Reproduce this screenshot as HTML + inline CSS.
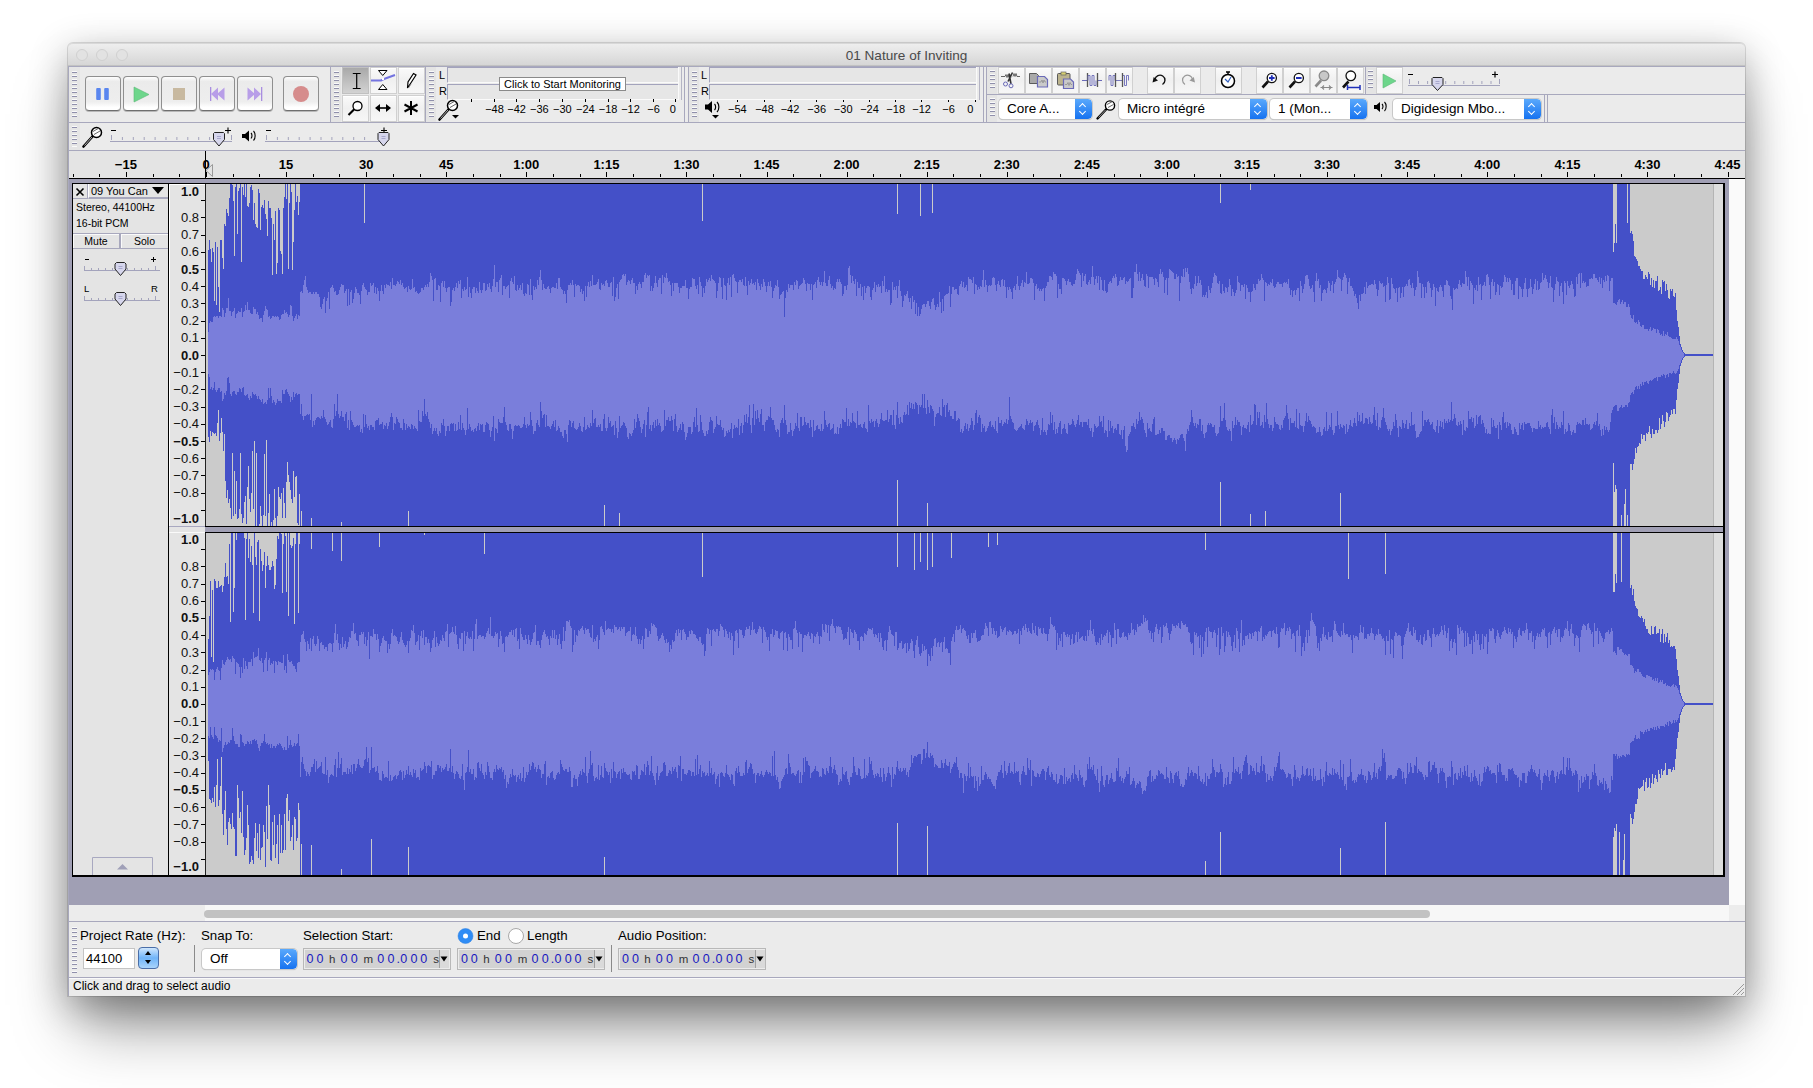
<!DOCTYPE html>
<html><head><meta charset="utf-8">
<style>
*{margin:0;padding:0;box-sizing:border-box}
html,body{width:1813px;height:1088px;overflow:hidden;background:#fff;font-family:"Liberation Sans",sans-serif;color:#000}
body{position:relative}
.a{position:absolute}
#win{position:absolute;left:68px;top:43px;width:1677px;height:953px;background:#ebebeb;border-radius:5px 5px 0 0;box-shadow:0 10px 38px rgba(0,0,0,0.3),0 40px 60px -10px rgba(0,0,0,0.4),0 0 0 1px rgba(0,0,0,0.12)}
#title{position:absolute;left:68px;top:43px;width:1677px;height:23px;border-radius:5px 5px 0 0;background:linear-gradient(#eeeeee,#d6d6d6);border-top:1px solid #d8d8d8;border-bottom:1px solid #c2c2c2}
#title .t{position:absolute;left:0;width:100%;top:4px;text-align:center;font-size:13.6px;color:#4a4a4a}
.tl{position:absolute;top:5px;width:12px;height:12px;border-radius:50%;border:1px solid #d0d0d0;background:#e2e2e2}
.hl{position:absolute;height:1px;background:#a8a8bd}
.vl{position:absolute;width:1px;background:#a8a8bd}
.grab{position:absolute;width:5px;background:repeating-linear-gradient(#fafafa 0 1px,#8f8fab 1px 2px,transparent 2px 4px)}
.btn{position:absolute;width:36px;height:35px;border-radius:4px;background:linear-gradient(#fdfdfd 0,#ebebeb 14%,#eeeeee 75%,#ffffff 92%);border:1px solid #8f8f8f;border-bottom-color:#6f6f6f;box-shadow:0 1px 0 #b8b8b8}
.tbtn{position:absolute;width:27px;height:27px;background:linear-gradient(#fafafa,#f0f0f0 50%,#f7f7f7);border:1px solid #d0d0d0;box-shadow:inset 0 1px 0 #fff}
.lbl{position:absolute;font-size:11px;white-space:nowrap}
.rul{position:absolute;font-size:13px;font-weight:bold;white-space:nowrap}
.vr{position:absolute;font-size:13px;line-height:15px;white-space:nowrap;text-align:right;width:39px;color:#111}
.combo{position:absolute;height:20px;background:#fff;border-radius:4px;box-shadow:0 0 0 1px #c8c8c8,0 1px 1px #b0b0b0;font-size:13.5px;padding-left:8px;line-height:20px;white-space:nowrap;overflow:hidden}
.combo .s{position:absolute;right:0;top:0;width:17px;height:20px;background:linear-gradient(#5aa9fc,#1672f0);border-radius:0 4px 4px 0}
.combo .s:before{content:"";position:absolute;left:5px;top:5px;width:4px;height:4px;border-left:1.5px solid #fff;border-top:1.5px solid #fff;transform:rotate(45deg)}
.combo .s:after{content:"";position:absolute;left:5px;top:10px;width:4px;height:4px;border-right:1.5px solid #fff;border-bottom:1.5px solid #fff;transform:rotate(45deg)}
.tc{position:absolute;height:21px;background:#cfcfcf;border:1px solid #bdbdbd;box-shadow:inset 0 0 0 1px #e9e9e9;font-size:13px;color:#1e1ec8;white-space:nowrap;line-height:19px;letter-spacing:1px}
</style></head><body>
<div id="win"></div>
<div id="title">
  <div class="tl" style="left:8px"></div><div class="tl" style="left:28px"></div><div class="tl" style="left:48px"></div>
  <div class="t">01 Nature of Inviting</div>
</div>
<!-- TOOLBARS -->
<div class="a" style="left:69px;top:67px;width:1676px;height:83px;background:#ebebeb"></div>
<div class="hl" style="left:68px;top:66px;width:1677px"></div>
<div class="vl" style="left:68px;top:66px;height:930px"></div>
<div class="hl" style="left:69px;top:122px;width:1676px"></div>
<div class="hl" style="left:986px;top:94px;width:759px"></div>
<div class="a" style="left:331px;top:67px;width:10px;height:55px;background:#e4e4e4"></div><div class="a" style="left:426px;top:67px;width:10px;height:55px;background:#e4e4e4"></div><div class="a" style="left:689px;top:67px;width:10px;height:55px;background:#e4e4e4"></div><div class="a" style="left:987px;top:67px;width:10px;height:27px;background:#e4e4e4"></div><div class="a" style="left:1366px;top:67px;width:10px;height:27px;background:#e4e4e4"></div><div class="a" style="left:987px;top:95px;width:10px;height:27px;background:#e4e4e4"></div>
<!-- transport toolbar -->
<div class="a" style="left:69px;top:67px;width:11px;height:55px;background:#e5e5e5"></div><div class="grab" style="left:72px;top:71px;height:47px"></div>
<div class="btn" style="left:85px;top:76px"></div>
<div class="btn" style="left:123px;top:76px"></div>
<div class="btn" style="left:161px;top:76px"></div>
<div class="btn" style="left:199px;top:76px"></div>
<div class="btn" style="left:237px;top:76px"></div>
<div class="btn" style="left:283px;top:76px"></div>
<svg class="a" style="left:0;top:0" width="400" height="125">
  <rect x="96.2" y="88" width="4.6" height="12" rx="1" fill="#5a86ef"/><rect x="104.2" y="88" width="4.6" height="12" rx="1" fill="#5a86ef"/>
  <path d="M134 87 L149 94.5 L134 102Z" fill="#6dd68b" stroke="#5bb877" stroke-width="0.6"/>
  <rect x="173" y="88" width="12" height="12" fill="#c8b9a0"/>
  <rect x="210" y="87" width="1.3" height="14" fill="#a98ee0"/><path d="M211 94 L218 87.5 L218 100.5Z M217 94 L224.5 87.5 L224.5 100.5Z" fill="#b89ee8"/>
  <rect x="261" y="87" width="1.3" height="14" fill="#a98ee0"/><path d="M261 94 L254 87.5 L254 100.5Z M255 94 L247.5 87.5 L247.5 100.5Z" fill="#b89ee8"/>
  <circle cx="301" cy="94" r="8" fill="#d68c8c"/>
</svg>
<div class="vl" style="left:330px;top:67px;height:55px"></div>
<!-- tools toolbar -->
<div class="grab" style="left:334px;top:71px;height:47px"></div>
<div class="tbtn" style="left:342px;top:67px;background:linear-gradient(#a9a9a9,#c6c6c6 70%,#d2d2d2);box-shadow:none;border-color:#c0c0c0"></div>
<div class="tbtn" style="left:370px;top:67px"></div>
<div class="tbtn" style="left:398px;top:67px"></div>
<div class="tbtn" style="left:342px;top:95px"></div>
<div class="tbtn" style="left:370px;top:95px"></div>
<div class="tbtn" style="left:398px;top:95px"></div>
<svg class="a" style="left:0;top:0" width="440" height="125">
  <path d="M352.8 73.5h7.8M352.8 88.5h7.8M356.7 73.5v15" stroke="#000" stroke-width="1.2" fill="none"/>
  <path d="M378.5 70.5h8.5l-4.25 5z M378.5 89.5h8.5l-4.25 -5z" stroke="#000" stroke-width="1" fill="#fff"/>
  <path d="M371 80.5 L381 80.5 L384 79 L395 75" stroke="#7474e0" stroke-width="2" fill="none"/><circle cx="383" cy="79" r="1.2" fill="#fff"/>
  <path d="M407.5 88 L408 82 L413.5 73.5 L416 75 L410.5 83.5 Z" stroke="#000" stroke-width="1.2" fill="#fff"/><path d="M408.5 88l2.5 -4" stroke="#777" stroke-width="0.8"/>
  <circle cx="357.5" cy="106" r="4.5" stroke="#000" stroke-width="1.3" fill="#fff"/><path d="M354.5 109 L348.5 115" stroke="#000" stroke-width="2.2"/>
  <path d="M376 108h14" stroke="#000" stroke-width="1.6"/><path d="M375 108l5-4v8z M391 108l-5-4v8z" fill="#000"/>
  <path d="M411 101v14 M404.5 104.5l13 7 M417.5 104.5l-13 7" stroke="#000" stroke-width="2"/>
</svg>
<div class="vl" style="left:425px;top:67px;height:55px"></div>
<!-- record meter -->
<div class="grab" style="left:429px;top:71px;height:47px"></div>
<div class="lbl" style="left:439px;top:69px;font-size:11px">L</div>
<div class="lbl" style="left:439px;top:85px;font-size:11px">R</div>
<div class="a" style="left:447px;top:67px;width:232px;height:16px;border-left:1px solid #a3a3bc;border-top:1px solid #a3a3bc;border-bottom:1px solid #fafafa;background:#e6e6e6"></div>
<div class="a" style="left:447px;top:84px;width:232px;height:16px;border-left:1px solid #a3a3bc;border-top:1px solid #a3a3bc;border-bottom:1px solid #fafafa;background:#e6e6e6"></div>
<div class="a" style="left:499px;top:77px;width:127px;height:14px;background:#fff;border:1px solid #8a8a8a;font-size:11px;line-height:12px;text-align:center;white-space:nowrap">Click to Start Monitoring</div>
<div class="vl" style="left:678px;top:67px;height:33px;background:#fafafa"></div><div class="vl" style="left:681px;top:67px;height:33px;background:#b4b4c4"></div>
<div class="vl" style="left:684px;top:67px;height:55px"></div>
<div class="vl" style="left:688px;top:67px;height:55px"></div>
<svg class="a" style="left:0;top:0" width="1000" height="125">
  <g stroke="#000" stroke-width="1">
  <path d="M471.5 99v3M494.5 99v3M516.5 99v3M539.5 99v3M562.5 99v3M585.5 99v3M608.5 99v3M630.5 99v3M653.5 99v3M675.5 99v3"/>
  <path d="M737.5 99v3M764.5 99v3M790.5 99v3M816.5 99v3M843.5 99v3M869.5 99v3M895.5 99v3M921.5 99v3M948.5 99v3M975.5 99v3"/>
  </g>
  <!-- mic icons -->
  <g id="mic"><path d="M439.5 119.5 L448.5 109.5" stroke="#000" stroke-width="2.6" stroke-linecap="round"/><path d="M440.5 118.5 L448 110" stroke="#fff" stroke-width="0.7"/><circle cx="452.5" cy="105.5" r="5" fill="#fff" stroke="#000" stroke-width="1.5"/><path d="M449 104.5l6 -3.5 M450 107.5l6 -3.5" stroke="#555" stroke-width="0.9"/></g>
  <path d="M452 115h7l-3.5 3.5z" fill="#000"/>
  <!-- speaker icon -->
  <path d="M705 104.5h3l4 -3.5v12l-4 -3.5h-3z" fill="#000"/><path d="M714.5 104c1.5 1.5 1.5 4.5 0 6 M717 102c2.5 2.5 2.5 7.5 0 10" stroke="#000" stroke-width="1.2" fill="none"/>
  <path d="M712 115h7l-3.5 3.5z" fill="#000"/>
</svg>
<div class="lbl" style="left:494.5px;top:103px;width:30px;margin-left:-15px;text-align:center">&#8722;48</div><div class="lbl" style="left:516.6px;top:103px;width:30px;margin-left:-15px;text-align:center">&#8722;42</div><div class="lbl" style="left:539.3px;top:103px;width:30px;margin-left:-15px;text-align:center">&#8722;36</div><div class="lbl" style="left:562.4px;top:103px;width:30px;margin-left:-15px;text-align:center">&#8722;30</div><div class="lbl" style="left:585.4px;top:103px;width:30px;margin-left:-15px;text-align:center">&#8722;24</div><div class="lbl" style="left:608.1px;top:103px;width:30px;margin-left:-15px;text-align:center">&#8722;18</div><div class="lbl" style="left:630.5px;top:103px;width:30px;margin-left:-15px;text-align:center">&#8722;12</div><div class="lbl" style="left:653.5px;top:103px;width:30px;margin-left:-15px;text-align:center">&#8722;6</div><div class="lbl" style="left:672.8px;top:103px;width:30px;margin-left:-15px;text-align:center">0</div>
<!-- play meter -->
<div class="grab" style="left:692px;top:71px;height:47px"></div>
<div class="lbl" style="left:701px;top:69px">L</div>
<div class="lbl" style="left:701px;top:85px">R</div>
<div class="a" style="left:709px;top:67px;width:268px;height:16px;border-left:1px solid #a3a3bc;border-top:1px solid #a3a3bc;border-bottom:1px solid #fafafa;background:#e6e6e6"></div>
<div class="a" style="left:709px;top:84px;width:268px;height:16px;border-left:1px solid #a3a3bc;border-top:1px solid #a3a3bc;border-bottom:1px solid #fafafa;background:#e6e6e6"></div>
<div class="vl" style="left:976px;top:67px;height:33px;background:#fafafa"></div><div class="vl" style="left:979px;top:67px;height:33px;background:#b4b4c4"></div>
<div class="lbl" style="left:737.3px;top:103px;width:30px;margin-left:-15px;text-align:center">&#8722;54</div><div class="lbl" style="left:764.5px;top:103px;width:30px;margin-left:-15px;text-align:center">&#8722;48</div><div class="lbl" style="left:790.0px;top:103px;width:30px;margin-left:-15px;text-align:center">&#8722;42</div><div class="lbl" style="left:816.7px;top:103px;width:30px;margin-left:-15px;text-align:center">&#8722;36</div><div class="lbl" style="left:843.2px;top:103px;width:30px;margin-left:-15px;text-align:center">&#8722;30</div><div class="lbl" style="left:869.5px;top:103px;width:30px;margin-left:-15px;text-align:center">&#8722;24</div><div class="lbl" style="left:895.7px;top:103px;width:30px;margin-left:-15px;text-align:center">&#8722;18</div><div class="lbl" style="left:921.6px;top:103px;width:30px;margin-left:-15px;text-align:center">&#8722;12</div><div class="lbl" style="left:948.5px;top:103px;width:30px;margin-left:-15px;text-align:center">&#8722;6</div><div class="lbl" style="left:970.2px;top:103px;width:30px;margin-left:-15px;text-align:center">0</div>
<div class="vl" style="left:983px;top:67px;height:55px"></div>
<div class="vl" style="left:986px;top:67px;height:55px"></div>
<!-- edit toolbar -->
<div class="grab" style="left:990px;top:70px;height:20px"></div>
<div class="tbtn" style="left:998px;top:67px"></div>
<div class="tbtn" style="left:1025px;top:67px"></div>
<div class="tbtn" style="left:1052px;top:67px"></div>
<div class="tbtn" style="left:1079px;top:67px"></div>
<div class="tbtn" style="left:1106px;top:67px"></div>
<div class="tbtn" style="left:1147px;top:67px"></div>
<div class="tbtn" style="left:1174px;top:67px"></div>
<div class="tbtn" style="left:1215px;top:67px"></div>
<div class="tbtn" style="left:1256px;top:67px"></div>
<div class="tbtn" style="left:1283px;top:67px"></div>
<div class="tbtn" style="left:1310px;top:67px"></div>
<div class="tbtn" style="left:1337px;top:67px"></div>
<div class="vl" style="left:1365px;top:67px;height:27px"></div>
<div class="grab" style="left:1368px;top:70px;height:20px"></div>
<div class="tbtn" style="left:1376px;top:67px"></div>
<svg class="a" style="left:0;top:0" width="1560" height="125">
  <!-- cut -->
  <path d="M1001 76.5h4l1 -2l1 3l1 -3l1 3l1 -3l1 3 M1013 76.5l1 -3l1 3l1 -3l1 3h3" stroke="#555" stroke-width="0.9" fill="none"/>
  <path d="M1012.5 72.5 L1008 81.5 M1009 73.5 L1011 84" stroke="#333" stroke-width="1.6"/>
  <circle cx="1005.5" cy="84" r="2" stroke="#6a6ab8" stroke-width="1" fill="none"/><circle cx="1011" cy="85.8" r="2" stroke="#6a6ab8" stroke-width="1" fill="none"/>
  <!-- copy -->
  <path d="M1029.5 73.5h7l2 2v8h-9z" fill="#a9a9a9" stroke="#5a5a5a" stroke-width="1"/>
  <path d="M1037.5 76.5h7l3 3v7.5h-10z" fill="#cacaca" stroke="#6a6ab8" stroke-width="1.2"/>
  <path d="M1039 82h2l1 -2l1 3l1 -3l1 2h1" stroke="#888" stroke-width="0.7" fill="none"/>
  <!-- paste -->
  <rect x="1057.5" y="73.5" width="12.5" height="11.5" rx="1" fill="#bcb48e" stroke="#5a5a5a" stroke-width="1"/>
  <rect x="1061" y="72" width="5" height="3" fill="#d8d070" stroke="#666" stroke-width="0.7"/>
  <path d="M1063.5 79h7l3 3v6.5h-10z" fill="#cacaca" stroke="#6a6ab8" stroke-width="1.2"/>
  <path d="M1065 84.5h2l1 -2l1 3l1 -3l1 2h1" stroke="#888" stroke-width="0.7" fill="none"/>
  <!-- trim -->
  <path d="M1082 80.5h5.5 M1097.5 80.5h4.5" stroke="#6a6ab8" stroke-width="1"/>
  <path d="M1087.5 73v14 M1097.5 73v14" stroke="#555" stroke-width="1.3"/>
  <path d="M1088 80.5v-5h2v10h2v-10h2v10h2v-5" stroke="#6a6ab8" stroke-width="0.9" fill="none"/>
  <!-- silence -->
  <path d="M1109 80.5v-5h2v10h2v-10h2v5 M1122.5 80.5v-5h2v10h2v-10h2v5 M1115.5 80.5h7" stroke="#6a6ab8" stroke-width="0.9" fill="none"/>
  <path d="M1115.5 73v14 M1122.5 73v14" stroke="#555" stroke-width="1.3"/>
  <!-- undo/redo -->
  <path d="M1155 79.5 A5 5 0 1 1 1162.5 84.5" stroke="#111" stroke-width="1.4" fill="none"/><path d="M1152.5 82.5l1.2 -5.5l4.3 3.5z" fill="#111"/>
  <path d="M1192.5 79.5 A5 5 0 1 0 1185 84.5" stroke="#999" stroke-width="1.2" fill="none"/><path d="M1195 82.5l-1.2 -5.5l-4.3 3.5z" fill="#999"/>
  <!-- sync lock (timer) -->
  <circle cx="1228" cy="81" r="6.5" stroke="#000" stroke-width="1.5" fill="#fff"/><path d="M1226 72h4 M1228 72v3" stroke="#000" stroke-width="1.4"/><path d="M1225 79l3 3l3 -5" stroke="#3060c0" stroke-width="1.2" fill="none"/>
  <!-- zoom in/out/sel/fit -->
  <g stroke-width="2.6" stroke-linecap="butt"><path d="M1262.5 87.5l5.5 -6 M1289.5 87.5l5.5 -6 M1343 87.5l5.5 -6" stroke="#111"/><path d="M1315.5 86.5l5.5 -6" stroke="#8a8a8a"/></g>
  <g stroke-width="1.3"><circle cx="1271.8" cy="78" r="4.6" stroke="#111" fill="#fff"/><circle cx="1298.8" cy="78" r="4.6" stroke="#111" fill="#fff"/><circle cx="1324" cy="75.8" r="4.8" stroke="#8a8a8a" fill="#c8c8c8"/><circle cx="1350.8" cy="75.8" r="4.8" stroke="#111" fill="#fff"/></g>
  <path d="M1269 78h5.6 M1271.8 75.2v5.6 M1296 78h5.6" stroke="#1f2fb8" stroke-width="1.8"/>
  <path d="M1320.5 87.5h12 M1324 85.5l-2 2l2 2 M1329 85.5l2 2l-2 2" stroke="#8a8a8a" stroke-width="1.1" fill="none"/>
  <path d="M1347.5 87.5h12.5 M1347.5 85v5 M1360 85v5" stroke="#1f2fb8" stroke-width="1.5"/>
  <!-- play at speed -->
  <path d="M1383 74l13 7l-13 7z" fill="#6dd68b" stroke="#5bb877" stroke-width="0.6"/>
  <!-- speed slider -->
  <path d="M1408 85.5h92" stroke="#a3a3bc" stroke-width="1"/><path d="M1418.5 81v3 M1427.6 81v3 M1436.7 81v3 M1445.7 81v3 M1454.8 81v3 M1463.8 81v3 M1472.8 81v3 M1481.9 81v3 M1491.0 81v3 M1409.5 79v5 M1499.5 79v5" stroke="#a3a3bc" stroke-width="1"/>
  <path d="M1408 74.5h5 M1492 74.5h6 M1495 71.5v6" stroke="#000" stroke-width="1.2"/>
  <path d="M1433 77.5h9l1 1v6l-5.5 6l-5.5 -6v-6z" fill="#d6d6ec" stroke="#222" stroke-width="1"/><path d="M1435.5 81.5h4 M1435.5 83.5h4" stroke="#9a9ac4" stroke-width="0.8"/>
</svg>
<!-- device toolbar -->
<div class="grab" style="left:990px;top:98px;height:20px"></div>
<div class="combo" style="left:999px;top:99px;width:93px">Core A...<div class="s"></div></div>
<div class="combo" style="left:1119px;top:99px;width:148px">Micro intégré<div class="s"></div></div>
<div class="combo" style="left:1270px;top:99px;width:97px">1 (Mon...<div class="s"></div></div>
<div class="combo" style="left:1393px;top:99px;width:148px">Digidesign Mbo...<div class="s"></div></div>
<svg class="a" style="left:0;top:0" width="1560" height="125">
  <path d="M1097.5 118.5 L1106 109.5" stroke="#000" stroke-width="2.4" stroke-linecap="round"/><path d="M1098.5 117.5 L1105.5 110" stroke="#fff" stroke-width="0.6"/><circle cx="1110" cy="105.5" r="4.6" fill="#fff" stroke="#000" stroke-width="1.4"/><path d="M1107 104.5l5.5 -3 M1108 107.5l5.5 -3" stroke="#555" stroke-width="0.9"/>
  <path d="M1374 105h2.5l3.5 -3v10l-3.5 -3h-2.5z" fill="#000"/><path d="M1382 104c1.3 1.3 1.3 3.7 0 5 M1384.5 102c2.2 2.2 2.2 6.8 0 9" stroke="#000" stroke-width="1.1" fill="none"/>
</svg>
<div class="vl" style="left:1544px;top:95px;height:27px"></div>
<div class="vl" style="left:1547px;top:95px;height:27px"></div>
<!-- mixer toolbar -->
<div class="a" style="left:69px;top:123px;width:11px;height:27px;background:#e5e5e5"></div><div class="grab" style="left:72px;top:126px;height:21px"></div>
<svg class="a" style="left:0;top:120px" width="400" height="30"><path d="M83.5 26.5 L92.5 16.5" stroke="#000" stroke-width="2.6" stroke-linecap="round"/><path d="M84.5 25.5 L92 17" stroke="#fff" stroke-width="0.7"/><circle cx="96.5" cy="12.5" r="5" fill="#fff" stroke="#000" stroke-width="1.5"/><path d="M93 11.5l6 -3.5 M94 14.5l6 -3.5" stroke="#555" stroke-width="0.9"/><path d="M110 21.5h122 M265 21.5h122" stroke="#a3a3bc" stroke-width="1"/><path d="M122.4 17v3 M133.3 17v3 M144.2 17v3 M155.1 17v3 M166.0 17v3 M176.9 17v3 M187.8 17v3 M198.7 17v3 M209.6 17v3 M277.4 17v3 M288.3 17v3 M299.2 17v3 M310.1 17v3 M321.0 17v3 M331.9 17v3 M342.8 17v3 M353.7 17v3 M364.6 17v3 M111.5 15v5 M231.5 15v5 M266.5 15v5" stroke="#a3a3bc" stroke-width="1"/><path d="M111 10.5h5 M225 10.5h6 M228 7.5v6 M266 10.5h5 M381 10.5h6 M384 7.5v6" stroke="#000" stroke-width="1.1"/><path d="M214.5 12.5h9l1 1v6l-5.5 6.5l-5.5 -6.5v-6z M379 12.5h9l1 1v6l-5.5 6.5l-5.5 -6.5v-6z" fill="#d6d6ec" stroke="#222" stroke-width="1"/><path d="M217 16.5h4 M217 18.5h4 M381.5 16.5h4 M381.5 18.5h4" stroke="#9a9ac4" stroke-width="0.8"/><path d="M242 14h3l4 -3.5v11l-4 -3.5h-3z" fill="#000"/><path d="M251 13c1.3 1.3 1.3 4 0 5.5 M253.5 11c2.2 2.2 2.2 7.5 0 9.5" stroke="#000" stroke-width="1.1" fill="none"/></svg>

<!-- RULER -->
<div class="a" style="left:69px;top:150px;width:1676px;height:29px;background:#e4e4e4;border-top:1px solid #a8a8bd"></div>
<div class="a" style="left:69px;top:178px;width:1676px;height:1px;background:#000"></div>
<div class="rul" style="left:125.9px;top:157px;width:60px;margin-left:-30px;text-align:center">&#8722;15</div>
<div class="rul" style="left:206.0px;top:157px;width:60px;margin-left:-30px;text-align:center">0</div>
<div class="rul" style="left:286.1px;top:157px;width:60px;margin-left:-30px;text-align:center">15</div>
<div class="rul" style="left:366.2px;top:157px;width:60px;margin-left:-30px;text-align:center">30</div>
<div class="rul" style="left:446.2px;top:157px;width:60px;margin-left:-30px;text-align:center">45</div>
<div class="rul" style="left:526.3px;top:157px;width:60px;margin-left:-30px;text-align:center">1:00</div>
<div class="rul" style="left:606.4px;top:157px;width:60px;margin-left:-30px;text-align:center">1:15</div>
<div class="rul" style="left:686.5px;top:157px;width:60px;margin-left:-30px;text-align:center">1:30</div>
<div class="rul" style="left:766.6px;top:157px;width:60px;margin-left:-30px;text-align:center">1:45</div>
<div class="rul" style="left:846.6px;top:157px;width:60px;margin-left:-30px;text-align:center">2:00</div>
<div class="rul" style="left:926.7px;top:157px;width:60px;margin-left:-30px;text-align:center">2:15</div>
<div class="rul" style="left:1006.8px;top:157px;width:60px;margin-left:-30px;text-align:center">2:30</div>
<div class="rul" style="left:1086.9px;top:157px;width:60px;margin-left:-30px;text-align:center">2:45</div>
<div class="rul" style="left:1167.0px;top:157px;width:60px;margin-left:-30px;text-align:center">3:00</div>
<div class="rul" style="left:1247.0px;top:157px;width:60px;margin-left:-30px;text-align:center">3:15</div>
<div class="rul" style="left:1327.1px;top:157px;width:60px;margin-left:-30px;text-align:center">3:30</div>
<div class="rul" style="left:1407.2px;top:157px;width:60px;margin-left:-30px;text-align:center">3:45</div>
<div class="rul" style="left:1487.3px;top:157px;width:60px;margin-left:-30px;text-align:center">4:00</div>
<div class="rul" style="left:1567.4px;top:157px;width:60px;margin-left:-30px;text-align:center">4:15</div>
<div class="rul" style="left:1647.4px;top:157px;width:60px;margin-left:-30px;text-align:center">4:30</div>
<div class="rul" style="left:1727.5px;top:157px;width:60px;margin-left:-30px;text-align:center">4:45</div>
<svg class="a" style="left:0;top:0" width="1813" height="185"><path d="M73.5 174v3 M99.5 174v3 M126.5 172v5 M153.5 174v3 M179.5 174v3 M206.5 172v5 M233.5 174v3 M259.5 174v3 M286.5 172v5 M313.5 174v3 M339.5 174v3 M366.5 172v5 M393.5 174v3 M420.5 174v3 M446.5 172v5 M473.5 174v3 M500.5 174v3 M526.5 172v5 M553.5 174v3 M580.5 174v3 M606.5 172v5 M633.5 174v3 M660.5 174v3 M686.5 172v5 M713.5 174v3 M740.5 174v3 M767.5 172v5 M793.5 174v3 M820.5 174v3 M847.5 172v5 M873.5 174v3 M900.5 174v3 M927.5 172v5 M953.5 174v3 M980.5 174v3 M1007.5 172v5 M1033.5 174v3 M1060.5 174v3 M1087.5 172v5 M1114.5 174v3 M1140.5 174v3 M1167.5 172v5 M1194.5 174v3 M1220.5 174v3 M1247.5 172v5 M1274.5 174v3 M1300.5 174v3 M1327.5 172v5 M1354.5 174v3 M1381.5 174v3 M1407.5 172v5 M1434.5 174v3 M1461.5 174v3 M1487.5 172v5 M1514.5 174v3 M1541.5 174v3 M1567.5 172v5 M1594.5 174v3 M1621.5 174v3 M1647.5 172v5 M1674.5 174v3 M1701.5 174v3 M1728.5 172v5" stroke="#000" stroke-width="1"/><path d="M205.5 151v27" stroke="#000" stroke-width="1"/><path d="M212.5 164.5v12l-6.5 -6z" fill="none" stroke="#9a9a9a" stroke-width="1"/></svg>

<!-- TRACK AREA -->
<div class="a" style="left:69px;top:179px;width:1660px;height:726px;background:#a09fb4"></div>
<div class="a" style="left:1729px;top:179px;width:16px;height:726px;background:#fafafa"></div>
<!-- track panel -->
<div class="a" style="left:72px;top:183px;width:1653px;height:694px;background:#000"></div>
<div class="a" style="left:73px;top:184px;width:95px;height:691px;background:#e4e4e4"></div>
<div class="a" style="left:169px;top:184px;width:36px;height:342px;background:#e4e4e4;border-top:1px solid #fff;border-left:1px solid #fff"></div>
<div class="a" style="left:169px;top:533px;width:36px;height:342px;background:#e4e4e4"></div>
<div class="a" style="left:169px;top:526px;width:1554px;height:7px;background:#a09fb4"></div>
<div class="a" style="left:169px;top:526px;width:1554px;height:1px;background:#000"></div>
<div class="a" style="left:169px;top:532px;width:1554px;height:1px;background:#000"></div>
<div class="a" style="left:169px;top:526px;width:36px;height:7px;background:#e4e4e4;border-top:1px solid #a8a8c0;border-bottom:1px solid #fafafa"></div>
<div class="a" style="left:1713px;top:184px;width:10px;height:342px;background:#dedede;border-left:1px solid #b4b4b4"></div>
<div class="a" style="left:1713px;top:533px;width:10px;height:342px;background:#dedede;border-left:1px solid #b4b4b4"></div>
<!-- TCP -->
<div class="a" style="left:73px;top:184px;width:15px;height:15px;border:1px solid #a8a8bd;border-top:0;border-left:0;font-size:13px;line-height:14px;text-align:center;font-weight:bold"></div>
<div class="a" style="left:88px;top:184px;width:80px;height:15px;border-left:1px solid #fff;border-bottom:2px solid #a8a8bd;font-size:11px;line-height:15px;padding-left:2px;white-space:nowrap">09 You Can</div>
<svg class="a" style="left:0;top:0" width="210" height="880">
  <path d="M152 187h12l-6 7z" fill="#000"/>
  <path d="M76.5 188.5l7 7M83.5 188.5l-7 7" stroke="#000" stroke-width="1.6"/>
</svg>
<div class="lbl" style="left:76px;top:201px;font-size:10.5px">Stereo, 44100Hz</div>
<div class="lbl" style="left:76px;top:217px;font-size:10.5px">16-bit PCM</div>
<div class="a" style="left:73px;top:233px;width:47px;height:16px;border:1px solid #a8a8bd;border-left:0;border-top:1px solid #a8a8bd;font-size:10.5px;line-height:14px;text-align:center;background:#e4e4e4;box-shadow:inset 1px 1px 0 #fafafa">Mute</div>
<div class="a" style="left:120px;top:233px;width:48px;height:16px;border:1px solid #a8a8bd;border-right:0;font-size:10.5px;line-height:14px;text-align:center;background:#e4e4e4;box-shadow:inset 1px 1px 0 #fafafa">Solo</div>
<svg class="a" style="left:0;top:0" width="210" height="880">
  <g stroke="#a3a3bc" stroke-width="1"><path d="M84 270.5h76 M84 300.5h76"/></g>
  <g stroke="#a3a3bc" stroke-width="1"><path d="M84.5 266v4M91.5 268v2M98.5 268v2M105.5 268v2M112.5 268v2M127.5 268v2M134.5 268v2M141.5 268v2M148.5 268v2M155.5 266v4 M84.5 296v4M91.5 298v2M98.5 298v2M105.5 298v2M112.5 298v2M127.5 298v2M134.5 298v2M141.5 298v2M148.5 298v2M155.5 296v4"/></g>
  <path d="M85 259.5h4 M151 259.5h5 M153.5 257v5" stroke="#000" stroke-width="1"/>
  <path d="M116.5 262.5h8l1.5 1.5v5l-5.5 6.5l-5.5 -6.5v-5z M116.5 292.5h8l1.5 1.5v5l-5.5 6.5l-5.5 -6.5v-5z" fill="#d6d6ec" stroke="#222" stroke-width="1"/><path d="M118.5 266.5h4 M118.5 268.5h4 M118.5 296.5h4 M118.5 298.5h4" stroke="#9a9ac4" stroke-width="0.8"/>
  
  <path d="M92.5 875v-17.5h60v17.5" fill="#e4e4e4" stroke="#a8a8c0" stroke-width="1"/>
  <path d="M117 869.5h11l-5.5 -5.5z" fill="#a0a0b8"/>
</svg>
<div class="lbl" style="left:84px;top:283px;font-size:9.5px">L</div>
<div class="lbl" style="left:151px;top:283px;font-size:9.5px">R</div>
<div class="vr" style="left:160px;top:184px;font-weight:bold;">1.0</div>
<div class="vr" style="left:160px;top:210px;">0.8</div>
<div class="vr" style="left:160px;top:227px;">0.7</div>
<div class="vr" style="left:160px;top:244px;">0.6</div>
<div class="vr" style="left:160px;top:262px;font-weight:bold;">0.5</div>
<div class="vr" style="left:160px;top:279px;">0.4</div>
<div class="vr" style="left:160px;top:296px;">0.3</div>
<div class="vr" style="left:160px;top:313px;">0.2</div>
<div class="vr" style="left:160px;top:330px;">0.1</div>
<div class="vr" style="left:160px;top:348px;font-weight:bold;">0.0</div>
<div class="vr" style="left:160px;top:365px;">&#8722;0.1</div>
<div class="vr" style="left:160px;top:382px;">&#8722;0.2</div>
<div class="vr" style="left:160px;top:399px;">&#8722;0.3</div>
<div class="vr" style="left:160px;top:416px;">&#8722;0.4</div>
<div class="vr" style="left:160px;top:434px;font-weight:bold;">&#8722;0.5</div>
<div class="vr" style="left:160px;top:451px;">&#8722;0.6</div>
<div class="vr" style="left:160px;top:468px;">&#8722;0.7</div>
<div class="vr" style="left:160px;top:485px;">&#8722;0.8</div>
<div class="vr" style="left:160px;top:511px;font-weight:bold;">&#8722;1.0</div>
<div class="vr" style="left:160px;top:532px;font-weight:bold;">1.0</div>
<div class="vr" style="left:160px;top:559px;">0.8</div>
<div class="vr" style="left:160px;top:576px;">0.7</div>
<div class="vr" style="left:160px;top:593px;">0.6</div>
<div class="vr" style="left:160px;top:610px;font-weight:bold;">0.5</div>
<div class="vr" style="left:160px;top:628px;">0.4</div>
<div class="vr" style="left:160px;top:645px;">0.3</div>
<div class="vr" style="left:160px;top:662px;">0.2</div>
<div class="vr" style="left:160px;top:679px;">0.1</div>
<div class="vr" style="left:160px;top:696px;font-weight:bold;">0.0</div>
<div class="vr" style="left:160px;top:714px;">&#8722;0.1</div>
<div class="vr" style="left:160px;top:731px;">&#8722;0.2</div>
<div class="vr" style="left:160px;top:748px;">&#8722;0.3</div>
<div class="vr" style="left:160px;top:765px;">&#8722;0.4</div>
<div class="vr" style="left:160px;top:782px;font-weight:bold;">&#8722;0.5</div>
<div class="vr" style="left:160px;top:800px;">&#8722;0.6</div>
<div class="vr" style="left:160px;top:817px;">&#8722;0.7</div>
<div class="vr" style="left:160px;top:834px;">&#8722;0.8</div>
<div class="vr" style="left:160px;top:859px;font-weight:bold;">&#8722;1.0</div>
<svg class="a" style="left:0;top:0" width="210" height="880"><path d="M201 200.5h4 M201 217.5h4 M201 235.5h4 M201 252.5h4 M201 269.5h4 M201 286.5h4 M201 303.5h4 M201 321.5h4 M201 338.5h4 M201 355.5h4 M201 372.5h4 M201 389.5h4 M201 407.5h4 M201 424.5h4 M201 441.5h4 M201 458.5h4 M201 475.5h4 M201 493.5h4 M201 510.5h4 M201 549.5h4 M201 566.5h4 M201 584.5h4 M201 601.5h4 M201 618.5h4 M201 635.5h4 M201 652.5h4 M201 670.5h4 M201 687.5h4 M201 704.5h4 M201 721.5h4 M201 738.5h4 M201 756.5h4 M201 773.5h4 M201 790.5h4 M201 807.5h4 M201 824.5h4 M201 842.5h4 M201 859.5h4" stroke="#000" stroke-width="1"/><path d="M205.5 184v342 M205.5 533v342" stroke="#222" stroke-width="1"/></svg>
<svg class="a" style="left:0;top:0" width="1813" height="1088" shape-rendering="crispEdges"><rect x="206" y="184" width="1507" height="342" fill="#cbcbcb"/><rect x="206" y="533" width="1507" height="342" fill="#cbcbcb"/><path d="M206 355 208 355 208 250 209 250 209 240 210 240 210 249 211 249 211 262 212 262 212 248 213 248 213 252 214 252 214 301 215 301 215 242 216 242 216 305 217 305 217 247 218 247 218 287 219 287 219 312 220 312 220 240 222 240 222 258 223 258 223 269 224 269 224 224 225 224 225 226 226 226 226 209 227 209 227 213 228 213 228 216 229 216 229 198 230 198 230 184 232 184 232 185 233 185 233 201 234 201 234 256 235 256 235 187 236 187 236 184 237 184 237 234 238 234 238 191 239 191 239 188 240 188 240 184 241 184 241 262 242 262 242 187 243 187 243 195 244 195 244 184 245 184 245 197 246 197 246 184 247 184 247 206 248 206 248 207 249 207 249 203 250 203 250 187 251 187 251 185 252 185 252 190 253 190 253 220 254 220 254 203 255 203 255 224 256 224 256 227 257 227 257 228 258 228 258 189 259 189 259 193 260 193 260 230 261 230 261 207 262 207 262 205 263 205 263 208 264 208 264 200 265 200 265 214 266 214 266 219 267 219 267 236 268 236 268 201 269 201 269 208 271 208 271 218 272 218 272 275 273 275 273 224 274 224 274 240 275 240 275 211 276 211 276 274 277 274 277 263 278 263 278 208 279 208 279 210 280 210 280 251 281 251 281 254 282 254 282 274 283 274 283 208 284 208 284 197 285 197 285 184 286 184 286 199 287 199 287 184 288 184 288 269 289 269 289 203 290 203 290 184 291 184 291 192 292 192 292 270 293 270 293 242 294 242 294 210 295 210 295 184 296 184 296 202 297 202 297 196 298 196 298 215 299 215 299 202 300 202 300 184 364 184 364 223 365 223 365 184 702 184 702 221 703 221 703 184 897 184 897 214 898 214 898 184 920 184 920 216 921 216 921 184 932 184 932 213 933 213 933 184 1220 184 1220 203 1221 203 1221 184 1250 184 1250 190 1251 190 1251 184 1613 184 1613 252 1614 252 1614 243 1615 243 1615 224 1616 224 1616 243 1617 243 1617 184 1627 184 1627 223 1628 223 1628 184 1630 184 1630 233 1631 233 1631 231 1632 231 1632 234 1633 234 1633 241 1634 241 1634 256 1635 256 1635 257 1636 257 1636 259 1637 259 1637 261 1638 261 1638 266 1640 266 1640 269 1641 269 1641 271 1643 271 1643 279 1645 279 1645 275 1646 275 1646 277 1647 277 1647 279 1648 279 1648 272 1649 272 1649 274 1650 274 1650 285 1651 285 1651 278 1652 278 1652 287 1653 287 1653 280 1654 280 1654 288 1655 288 1655 281 1657 281 1657 276 1658 276 1658 291 1659 291 1659 290 1660 290 1660 287 1661 287 1661 294 1662 294 1662 280 1663 280 1663 282 1664 282 1664 281 1665 281 1665 291 1666 291 1666 284 1667 284 1667 290 1668 290 1668 298 1669 298 1669 299 1670 299 1670 289 1671 289 1671 291 1672 291 1672 289 1673 289 1673 296 1674 296 1674 297 1675 297 1675 293 1676 293 1676 310 1677 310 1677 321 1678 321 1678 327 1679 327 1679 336 1680 336 1680 344 1681 344 1681 347 1682 347 1682 350 1683 350 1683 352 1684 352 1684 353 1685 353 1685 354 1713 354 1713 356 1685 356 1685 357 1684 357 1684 358 1683 358 1683 360 1682 360 1682 363 1681 363 1681 366 1680 366 1680 374 1679 374 1679 383 1678 383 1678 389 1677 389 1677 400 1676 400 1676 414 1675 414 1675 409 1673 409 1673 414 1672 414 1672 410 1671 410 1671 415 1670 415 1670 417 1669 417 1669 421 1668 421 1668 413 1667 413 1667 412 1666 412 1666 422 1665 422 1665 427 1664 427 1664 421 1663 421 1663 415 1662 415 1662 424 1661 424 1661 429 1660 429 1660 418 1659 418 1659 430 1658 430 1658 433 1657 433 1657 430 1655 430 1655 434 1653 434 1653 429 1652 429 1652 438 1651 438 1651 434 1650 434 1650 426 1649 426 1649 432 1648 432 1648 434 1647 434 1647 433 1646 433 1646 441 1645 441 1645 435 1643 435 1643 439 1642 439 1642 434 1641 434 1641 444 1640 444 1640 443 1639 443 1639 446 1638 446 1638 447 1637 447 1637 453 1636 453 1636 448 1635 448 1635 459 1634 459 1634 464 1633 464 1633 470 1632 470 1632 464 1630 464 1630 526 1628 526 1628 515 1627 515 1627 526 1626 526 1626 489 1625 489 1625 504 1624 504 1624 526 1622 526 1622 515 1621 515 1621 526 1617 526 1617 489 1616 489 1616 485 1615 485 1615 492 1614 492 1614 463 1613 463 1613 526 1341 526 1341 493 1340 493 1340 526 1266 526 1266 511 1265 511 1265 526 1251 526 1251 514 1250 514 1250 526 1221 526 1221 482 1220 482 1220 526 928 526 928 503 927 503 927 526 898 526 898 480 897 480 897 526 620 526 620 513 619 513 619 526 605 526 605 505 604 505 604 526 409 526 409 511 408 511 408 526 342 526 342 522 341 522 341 526 312 526 312 518 311 518 311 526 302 526 302 511 301 511 301 526 300 526 300 494 299 494 299 525 298 525 298 523 297 523 297 476 296 476 296 477 295 477 295 497 294 497 294 471 293 471 293 503 292 503 292 499 291 499 291 490 290 490 290 482 289 482 289 475 288 475 288 462 287 462 287 482 286 482 286 518 285 518 285 503 284 503 284 488 283 488 283 518 282 518 282 493 281 493 281 499 280 499 280 497 279 497 279 487 278 487 278 516 277 516 277 526 276 526 276 518 275 518 275 489 274 489 274 520 273 520 273 526 272 526 272 522 271 522 271 526 270 526 270 494 269 494 269 513 268 513 268 526 267 526 267 440 266 440 266 516 265 516 265 454 264 454 264 515 263 515 263 526 262 526 262 516 261 516 261 506 260 506 260 524 259 524 259 526 257 526 257 453 256 453 256 526 255 526 255 441 254 441 254 509 253 509 253 451 252 451 252 493 251 493 251 512 250 512 250 499 249 499 249 466 248 466 248 487 247 487 247 524 246 524 246 496 245 496 245 502 244 502 244 518 243 518 243 523 242 523 242 514 241 514 241 453 240 453 240 509 239 509 239 518 238 518 238 519 237 519 237 481 236 481 236 514 235 514 235 471 234 471 234 516 233 516 233 453 232 453 232 519 231 519 231 508 230 508 230 499 229 499 229 503 228 503 228 490 227 490 227 498 226 498 226 481 225 481 225 434 224 434 224 451 223 451 223 432 222 432 222 418 221 418 221 433 220 433 220 441 219 441 219 410 218 410 218 423 217 423 217 436 216 436 216 433 215 433 215 434 214 434 214 433 213 433 213 432 212 432 212 436 211 436 211 431 210 431 210 442 209 442 209 437 208 437 208 355 206 355Z" fill="#4450c8"/><path d="M206 355 208 355 208 332 209 332 209 323 210 323 210 321 211 321 211 322 213 322 213 317 214 317 214 316 215 316 215 317 216 317 216 316 218 316 218 318 219 318 219 316 221 316 221 317 222 317 222 308 223 308 223 310 224 310 224 317 225 317 225 313 226 313 226 308 228 308 228 298 229 298 229 311 231 311 231 316 232 316 232 312 233 312 233 311 234 311 234 308 235 308 235 318 236 318 236 314 237 314 237 313 238 313 238 311 239 311 239 312 241 312 241 308 242 308 242 317 243 317 243 312 244 312 244 311 245 311 245 305 246 305 246 310 247 310 247 302 248 302 248 310 250 310 250 313 251 313 251 314 253 314 253 307 254 307 254 309 256 309 256 314 257 314 257 312 258 312 258 315 259 315 259 319 260 319 260 318 262 318 262 322 263 322 263 315 264 315 264 311 265 311 265 306 266 306 266 309 267 309 267 310 268 310 268 317 269 317 269 316 270 316 270 319 271 319 271 318 272 318 272 316 274 316 274 317 275 317 275 316 276 316 276 317 277 317 277 316 278 316 278 317 279 317 279 320 280 320 280 319 281 319 281 315 282 315 282 314 284 314 284 310 285 310 285 313 286 313 286 312 287 312 287 314 288 314 288 317 289 317 289 315 290 315 290 305 291 305 291 306 292 306 292 316 293 316 293 321 294 321 294 318 295 318 295 316 296 316 296 314 297 314 297 319 298 319 298 315 299 315 299 316 300 316 300 292 301 292 301 291 302 291 302 293 303 293 303 285 304 285 304 280 305 280 305 276 306 276 306 287 307 287 307 290 308 290 308 293 309 293 309 292 311 292 311 294 313 294 313 292 314 292 314 294 315 294 315 292 317 292 317 294 319 294 319 297 320 297 320 307 321 307 321 309 322 309 322 304 323 304 323 299 324 299 324 297 325 297 325 313 326 313 326 301 327 301 327 298 328 298 328 292 329 292 329 309 330 309 330 288 331 288 331 287 332 287 332 285 333 285 333 288 334 288 334 292 335 292 335 291 336 291 336 295 338 295 338 294 339 294 339 290 340 290 340 287 341 287 341 284 342 284 342 285 344 285 344 293 345 293 345 291 346 291 346 289 347 289 347 306 348 306 348 289 349 289 349 305 350 305 350 292 351 292 351 290 352 290 352 303 353 303 353 299 354 299 354 293 355 293 355 287 356 287 356 289 357 289 357 293 359 293 359 295 360 295 360 304 361 304 361 291 362 291 362 285 363 285 363 283 364 283 364 287 365 287 365 289 366 289 366 290 367 290 367 295 368 295 368 292 370 292 370 283 371 283 371 286 372 286 372 285 373 285 373 283 374 283 374 293 375 293 375 287 376 287 376 294 377 294 377 288 378 288 378 291 379 291 379 301 380 301 380 291 381 291 381 285 382 285 382 291 383 291 383 294 384 294 384 285 385 285 385 288 386 288 386 284 387 284 387 285 389 285 389 286 390 286 390 282 391 282 391 289 392 289 392 278 393 278 393 285 395 285 395 286 396 286 396 284 397 284 397 281 398 281 398 282 399 282 399 284 400 284 400 280 401 280 401 285 402 285 402 283 403 283 403 287 404 287 404 289 405 289 405 288 406 288 406 287 407 287 407 292 408 292 408 286 409 286 409 289 410 289 410 290 411 290 411 289 412 289 412 279 413 279 413 288 414 288 414 287 415 287 415 292 416 292 416 291 417 291 417 293 418 293 418 294 419 294 419 293 420 293 420 292 421 292 421 288 423 288 423 290 424 290 424 287 425 287 425 285 426 285 426 287 427 287 427 284 428 284 428 287 429 287 429 282 430 282 430 273 431 273 431 276 432 276 432 280 433 280 433 301 434 301 434 279 435 279 435 278 436 278 436 290 438 290 438 285 439 285 439 286 440 286 440 302 441 302 441 283 442 283 442 281 443 281 443 287 444 287 444 281 445 281 445 288 446 288 446 292 447 292 447 288 448 288 448 287 450 287 450 306 451 306 451 302 452 302 452 290 453 290 453 288 454 288 454 291 455 291 455 287 456 287 456 283 457 283 457 288 458 288 458 281 459 281 459 284 460 284 460 280 461 280 461 298 462 298 462 289 463 289 463 291 464 291 464 287 465 287 465 290 466 290 466 289 467 289 467 277 468 277 468 297 469 297 469 287 470 287 470 293 471 293 471 298 472 298 472 289 473 289 473 287 475 287 475 293 476 293 476 288 477 288 477 291 478 291 478 293 479 293 479 282 480 282 480 290 481 290 481 293 482 293 482 290 483 290 483 283 485 283 485 291 486 291 486 290 487 290 487 284 488 284 488 287 489 287 489 283 490 283 490 289 491 289 491 292 492 292 492 286 493 286 493 279 494 279 494 265 495 265 495 287 496 287 496 282 498 282 498 292 499 292 499 280 500 280 500 278 501 278 501 275 502 275 502 295 503 295 503 286 505 286 505 289 506 289 506 287 507 287 507 286 508 286 508 285 509 285 509 298 510 298 510 281 511 281 511 278 512 278 512 282 513 282 513 284 514 284 514 276 515 276 515 290 516 290 516 291 517 291 517 285 518 285 518 290 519 290 519 288 520 288 520 285 521 285 521 290 522 290 522 283 523 283 523 294 524 294 524 296 525 296 525 293 526 293 526 294 527 294 527 284 528 284 528 285 529 285 529 295 530 295 530 279 531 279 531 295 532 295 532 300 533 300 533 286 534 286 534 290 535 290 535 287 536 287 536 289 537 289 537 280 538 280 538 285 539 285 539 277 540 277 540 270 541 270 541 280 542 280 542 290 543 290 543 284 544 284 544 288 545 288 545 289 547 289 547 287 548 287 548 286 549 286 549 289 550 289 550 293 551 293 551 288 552 288 552 287 554 287 554 288 556 288 556 283 557 283 557 289 558 289 558 278 560 278 560 287 561 287 561 289 562 289 562 290 563 290 563 294 564 294 564 291 565 291 565 294 566 294 566 303 567 303 567 290 568 290 568 285 570 285 570 283 571 283 571 285 572 285 572 280 573 280 573 285 574 285 574 297 575 297 575 284 576 284 576 286 577 286 577 285 579 285 579 286 580 286 580 292 581 292 581 289 582 289 582 294 583 294 583 291 584 291 584 301 585 301 585 286 586 286 586 297 587 297 587 286 588 286 588 282 589 282 589 287 590 287 590 281 591 281 591 286 592 286 592 275 593 275 593 285 596 285 596 284 597 284 597 282 598 282 598 279 599 279 599 289 600 289 600 290 601 290 601 283 602 283 602 285 603 285 603 284 604 284 604 286 605 286 605 281 606 281 606 280 607 280 607 283 608 283 608 287 610 287 610 283 611 283 611 282 612 282 612 296 613 296 613 277 614 277 614 301 615 301 615 297 616 297 616 288 617 288 617 284 618 284 618 299 619 299 619 282 620 282 620 280 621 280 621 279 622 279 622 275 623 275 623 274 624 274 624 276 625 276 625 274 626 274 626 285 627 285 627 282 628 282 628 280 629 280 629 281 630 281 630 284 631 284 631 280 632 280 632 278 633 278 633 283 635 283 635 294 636 294 636 286 637 286 637 290 638 290 638 284 639 284 639 282 640 282 640 284 641 284 641 288 642 288 642 282 644 282 644 275 645 275 645 273 646 273 646 278 647 278 647 275 648 275 648 276 649 276 649 275 650 275 650 291 651 291 651 286 652 286 652 291 653 291 653 288 654 288 654 283 655 283 655 276 656 276 656 283 657 283 657 287 658 287 658 280 659 280 659 278 661 278 661 294 662 294 662 275 663 275 663 283 664 283 664 277 665 277 665 278 666 278 666 273 667 273 667 278 668 278 668 282 669 282 669 281 670 281 670 285 671 285 671 296 672 296 672 283 673 283 673 291 674 291 674 283 678 283 678 287 679 287 679 293 680 293 680 288 682 288 682 286 685 286 685 280 686 280 686 288 688 288 688 299 689 299 689 289 690 289 690 287 692 287 692 278 693 278 693 279 695 279 695 286 696 286 696 289 697 289 697 285 698 285 698 294 699 294 699 277 700 277 700 282 701 282 701 286 702 286 702 297 703 297 703 288 704 288 704 293 705 293 705 286 706 286 706 279 707 279 707 282 708 282 708 280 709 280 709 278 710 278 710 281 711 281 711 275 712 275 712 279 713 279 713 280 714 280 714 281 715 281 715 283 716 283 716 298 717 298 717 291 718 291 718 283 719 283 719 277 720 277 720 278 721 278 721 287 722 287 722 299 723 299 723 278 724 278 724 285 725 285 725 286 726 286 726 300 727 300 727 283 728 283 728 278 729 278 729 285 730 285 730 277 731 277 731 297 732 297 732 275 733 275 733 274 734 274 734 278 735 278 735 281 736 281 736 282 737 282 737 293 738 293 738 282 739 282 739 280 741 280 741 282 742 282 742 279 743 279 743 285 744 285 744 286 745 286 745 277 746 277 746 286 747 286 747 295 748 295 748 281 749 281 749 285 750 285 750 283 751 283 751 279 752 279 752 284 753 284 753 283 754 283 754 285 755 285 755 282 756 282 756 290 757 290 757 279 758 279 758 283 759 283 759 286 760 286 760 290 761 290 761 284 762 284 762 287 763 287 763 279 764 279 764 282 765 282 765 286 766 286 766 292 767 292 767 286 768 286 768 282 769 282 769 286 770 286 770 281 771 281 771 287 772 287 772 298 773 298 773 291 774 291 774 288 775 288 775 285 776 285 776 286 777 286 777 280 778 280 778 287 779 287 779 299 780 299 780 295 781 295 781 294 782 294 782 292 783 292 783 291 784 291 784 317 785 317 785 298 786 298 786 290 787 290 787 292 788 292 788 284 789 284 789 288 790 288 790 285 793 285 793 290 794 290 794 282 795 282 795 285 796 285 796 280 797 280 797 281 798 281 798 289 799 289 799 286 800 286 800 285 801 285 801 284 802 284 802 283 803 283 803 278 804 278 804 280 805 280 805 284 806 284 806 291 807 291 807 283 808 283 808 284 810 284 810 290 811 290 811 284 812 284 812 300 813 300 813 285 814 285 814 284 815 284 815 282 816 282 816 288 817 288 817 280 818 280 818 277 819 277 819 282 820 282 820 285 821 285 821 282 822 282 822 286 823 286 823 282 824 282 824 271 825 271 825 283 826 283 826 286 828 286 828 280 829 280 829 276 830 276 830 284 831 284 831 288 832 288 832 286 833 286 833 290 834 290 834 288 835 288 835 289 836 289 836 282 837 282 837 279 838 279 838 282 839 282 839 279 840 279 840 282 841 282 841 284 842 284 842 296 843 296 843 294 844 294 844 286 846 286 846 290 847 290 847 285 848 285 848 268 849 268 849 266 850 266 850 275 851 275 851 283 852 283 852 276 853 276 853 281 854 281 854 284 855 284 855 279 856 279 856 296 857 296 857 282 858 282 858 288 860 288 860 284 861 284 861 296 862 296 862 287 863 287 863 300 864 300 864 286 865 286 865 293 866 293 866 288 867 288 867 286 869 286 869 287 870 287 870 297 871 297 871 300 872 300 872 290 873 290 873 288 874 288 874 282 875 282 875 292 876 292 876 285 877 285 877 287 878 287 878 284 879 284 879 287 880 287 880 286 881 286 881 293 882 293 882 281 883 281 883 286 884 286 884 276 885 276 885 292 886 292 886 289 887 289 887 292 888 292 888 290 890 290 890 305 891 305 891 303 892 303 892 282 893 282 893 290 894 290 894 287 895 287 895 290 896 290 896 286 897 286 897 298 898 298 898 286 899 286 899 280 900 280 900 291 901 291 901 296 902 296 902 307 903 307 903 301 904 301 904 295 905 295 905 296 906 296 906 294 907 294 907 291 908 291 908 298 909 298 909 302 910 302 910 298 911 298 911 309 912 309 912 296 913 296 913 302 914 302 914 300 915 300 915 314 916 314 916 303 917 303 917 316 918 316 918 307 919 307 919 316 920 316 920 314 921 314 921 309 922 309 922 305 923 305 923 304 925 304 925 307 926 307 926 304 927 304 927 301 929 301 929 306 930 306 930 309 931 309 931 302 932 302 932 299 933 299 933 298 934 298 934 305 935 305 935 310 936 310 936 307 937 307 937 304 938 304 938 307 939 307 939 292 940 292 940 302 941 302 941 313 942 313 942 299 943 299 943 311 944 311 944 296 945 296 945 295 946 295 946 294 948 294 948 293 949 293 949 286 950 286 950 307 951 307 951 294 952 294 952 287 954 287 954 290 955 290 955 289 957 289 957 294 958 294 958 295 959 295 959 286 960 286 960 284 961 284 961 281 962 281 962 287 963 287 963 282 964 282 964 288 965 288 965 287 966 287 966 285 967 285 967 291 968 291 968 277 969 277 969 279 971 279 971 280 972 280 972 283 973 283 973 277 974 277 974 294 975 294 975 284 976 284 976 285 977 285 977 290 978 290 978 287 979 287 979 289 980 289 980 286 981 286 981 287 982 287 982 280 983 280 983 270 984 270 984 287 985 287 985 280 986 280 986 285 987 285 987 292 988 292 988 286 989 286 989 285 990 285 990 286 991 286 991 285 992 285 992 278 993 278 993 277 994 277 994 278 995 278 995 285 996 285 996 291 997 291 997 284 998 284 998 281 999 281 999 285 1000 285 1000 287 1001 287 1001 280 1002 280 1002 279 1003 279 1003 286 1004 286 1004 280 1005 280 1005 287 1006 287 1006 298 1007 298 1007 287 1008 287 1008 290 1009 290 1009 287 1010 287 1010 289 1011 289 1011 292 1012 292 1012 299 1013 299 1013 288 1014 288 1014 286 1015 286 1015 290 1016 290 1016 284 1017 284 1017 276 1018 276 1018 286 1019 286 1019 290 1020 290 1020 286 1021 286 1021 283 1022 283 1022 280 1023 280 1023 287 1024 287 1024 282 1025 282 1025 283 1026 283 1026 272 1027 272 1027 284 1029 284 1029 283 1030 283 1030 278 1032 278 1032 279 1033 279 1033 283 1034 283 1034 300 1035 300 1035 286 1036 286 1036 284 1037 284 1037 289 1038 289 1038 288 1039 288 1039 291 1040 291 1040 289 1041 289 1041 291 1042 291 1042 289 1043 289 1043 288 1044 288 1044 301 1045 301 1045 288 1046 288 1046 286 1047 286 1047 282 1049 282 1049 276 1051 276 1051 277 1052 277 1052 280 1053 280 1053 272 1054 272 1054 274 1056 274 1056 276 1057 276 1057 298 1058 298 1058 284 1059 284 1059 289 1061 289 1061 294 1062 294 1062 278 1064 278 1064 279 1065 279 1065 281 1066 281 1066 285 1067 285 1067 281 1068 281 1068 279 1069 279 1069 282 1071 282 1071 285 1072 285 1072 286 1073 286 1073 284 1075 284 1075 280 1076 280 1076 274 1077 274 1077 269 1078 269 1078 271 1079 271 1079 273 1080 273 1080 275 1081 275 1081 287 1082 287 1082 273 1083 273 1083 281 1084 281 1084 276 1085 276 1085 274 1086 274 1086 284 1087 284 1087 285 1088 285 1088 282 1089 282 1089 280 1090 280 1090 284 1091 284 1091 277 1092 277 1092 266 1093 266 1093 277 1094 277 1094 285 1095 285 1095 279 1096 279 1096 276 1097 276 1097 283 1098 283 1098 276 1099 276 1099 290 1100 290 1100 277 1101 277 1101 280 1102 280 1102 290 1103 290 1103 291 1104 291 1104 280 1105 280 1105 291 1106 291 1106 293 1107 293 1107 292 1108 292 1108 284 1109 284 1109 282 1110 282 1110 281 1111 281 1111 283 1112 283 1112 278 1113 278 1113 276 1114 276 1114 278 1115 278 1115 274 1116 274 1116 277 1117 277 1117 286 1118 286 1118 285 1119 285 1119 281 1120 281 1120 277 1121 277 1121 280 1123 280 1123 278 1124 278 1124 277 1125 277 1125 284 1126 284 1126 281 1127 281 1127 282 1128 282 1128 281 1129 281 1129 279 1130 279 1130 278 1131 278 1131 298 1133 298 1133 288 1134 288 1134 272 1136 272 1136 264 1137 264 1137 274 1138 274 1138 281 1139 281 1139 272 1140 272 1140 281 1141 281 1141 278 1142 278 1142 274 1143 274 1143 280 1144 280 1144 286 1145 286 1145 287 1146 287 1146 274 1147 274 1147 276 1148 276 1148 288 1149 288 1149 277 1153 277 1153 279 1154 279 1154 285 1155 285 1155 278 1156 278 1156 279 1157 279 1157 282 1158 282 1158 287 1159 287 1159 274 1160 274 1160 269 1161 269 1161 274 1162 274 1162 272 1163 272 1163 277 1164 277 1164 293 1165 293 1165 280 1166 280 1166 278 1167 278 1167 295 1168 295 1168 278 1169 278 1169 269 1170 269 1170 270 1171 270 1171 271 1172 271 1172 272 1173 272 1173 273 1174 273 1174 279 1176 279 1176 274 1177 274 1177 277 1178 277 1178 276 1179 276 1179 301 1180 301 1180 283 1181 283 1181 276 1182 276 1182 277 1183 277 1183 269 1184 269 1184 277 1185 277 1185 268 1186 268 1186 272 1187 272 1187 268 1188 268 1188 274 1189 274 1189 282 1190 282 1190 289 1191 289 1191 294 1192 294 1192 288 1193 288 1193 289 1194 289 1194 284 1195 284 1195 276 1196 276 1196 286 1197 286 1197 283 1198 283 1198 276 1199 276 1199 283 1200 283 1200 280 1201 280 1201 285 1202 285 1202 297 1203 297 1203 295 1204 295 1204 297 1205 297 1205 295 1206 295 1206 292 1207 292 1207 298 1208 298 1208 286 1209 286 1209 290 1210 290 1210 293 1211 293 1211 288 1212 288 1212 283 1213 283 1213 277 1214 277 1214 273 1215 273 1215 275 1216 275 1216 276 1217 276 1217 283 1218 283 1218 284 1219 284 1219 281 1220 281 1220 293 1221 293 1221 294 1222 294 1222 284 1223 284 1223 291 1224 291 1224 293 1225 293 1225 287 1226 287 1226 288 1227 288 1227 292 1228 292 1228 287 1229 287 1229 279 1230 279 1230 285 1231 285 1231 296 1232 296 1232 289 1233 289 1233 292 1234 292 1234 296 1235 296 1235 293 1236 293 1236 290 1237 290 1237 276 1238 276 1238 282 1239 282 1239 283 1240 283 1240 291 1241 291 1241 285 1243 285 1243 287 1244 287 1244 284 1245 284 1245 299 1246 299 1246 285 1247 285 1247 288 1248 288 1248 292 1250 292 1250 302 1251 302 1251 292 1252 292 1252 291 1253 291 1253 284 1254 284 1254 288 1255 288 1255 290 1256 290 1256 284 1258 284 1258 279 1259 279 1259 281 1260 281 1260 280 1261 280 1261 274 1262 274 1262 278 1263 278 1263 280 1264 280 1264 301 1265 301 1265 282 1266 282 1266 283 1267 283 1267 286 1268 286 1268 284 1269 284 1269 285 1270 285 1270 282 1271 282 1271 283 1272 283 1272 279 1273 279 1273 286 1274 286 1274 288 1275 288 1275 287 1276 287 1276 284 1277 284 1277 282 1279 282 1279 284 1282 284 1282 287 1283 287 1283 283 1284 283 1284 282 1285 282 1285 283 1286 283 1286 282 1287 282 1287 284 1288 284 1288 279 1289 279 1289 288 1290 288 1290 295 1291 295 1291 290 1292 290 1292 297 1293 297 1293 291 1294 291 1294 290 1295 290 1295 295 1296 295 1296 290 1297 290 1297 288 1299 288 1299 301 1300 301 1300 281 1301 281 1301 286 1302 286 1302 293 1303 293 1303 289 1304 289 1304 284 1305 284 1305 276 1306 276 1306 275 1308 275 1308 279 1309 279 1309 286 1310 286 1310 289 1311 289 1311 288 1312 288 1312 285 1313 285 1313 292 1314 292 1314 302 1315 302 1315 281 1316 281 1316 273 1317 273 1317 281 1318 281 1318 279 1319 279 1319 288 1320 288 1320 285 1321 285 1321 301 1322 301 1322 293 1323 293 1323 290 1324 290 1324 289 1325 289 1325 290 1326 290 1326 293 1327 293 1327 288 1328 288 1328 281 1329 281 1329 283 1330 283 1330 291 1331 291 1331 285 1332 285 1332 281 1333 281 1333 293 1334 293 1334 284 1335 284 1335 282 1336 282 1336 279 1337 279 1337 270 1338 270 1338 277 1339 277 1339 278 1340 278 1340 279 1341 279 1341 291 1342 291 1342 280 1343 280 1343 277 1344 277 1344 273 1345 273 1345 275 1346 275 1346 278 1347 278 1347 294 1348 294 1348 282 1349 282 1349 278 1350 278 1350 286 1352 286 1352 288 1353 288 1353 291 1354 291 1354 296 1355 296 1355 294 1356 294 1356 298 1357 298 1357 303 1358 303 1358 309 1359 309 1359 295 1360 295 1360 301 1361 301 1361 294 1363 294 1363 293 1364 293 1364 287 1365 287 1365 294 1366 294 1366 282 1367 282 1367 288 1368 288 1368 286 1369 286 1369 285 1371 285 1371 284 1373 284 1373 285 1374 285 1374 280 1375 280 1375 284 1376 284 1376 289 1377 289 1377 296 1378 296 1378 290 1379 290 1379 281 1380 281 1380 283 1381 283 1381 284 1382 284 1382 283 1383 283 1383 287 1384 287 1384 286 1385 286 1385 302 1386 302 1386 285 1387 285 1387 277 1388 277 1388 283 1389 283 1389 300 1390 300 1390 299 1391 299 1391 278 1392 278 1392 284 1393 284 1393 288 1394 288 1394 289 1395 289 1395 293 1396 293 1396 288 1397 288 1397 302 1398 302 1398 288 1399 288 1399 287 1400 287 1400 298 1401 298 1401 293 1402 293 1402 287 1403 287 1403 297 1404 297 1404 287 1405 287 1405 286 1406 286 1406 284 1407 284 1407 286 1408 286 1408 280 1409 280 1409 279 1410 279 1410 285 1411 285 1411 288 1412 288 1412 283 1413 283 1413 288 1414 288 1414 296 1415 296 1415 290 1416 290 1416 287 1417 287 1417 271 1418 271 1418 277 1419 277 1419 283 1421 283 1421 298 1422 298 1422 284 1423 284 1423 287 1424 287 1424 298 1425 298 1425 287 1426 287 1426 293 1427 293 1427 282 1428 282 1428 281 1429 281 1429 283 1430 283 1430 288 1431 288 1431 297 1432 297 1432 290 1433 290 1433 284 1434 284 1434 287 1435 287 1435 306 1436 306 1436 288 1437 288 1437 291 1438 291 1438 292 1439 292 1439 287 1440 287 1440 285 1441 285 1441 287 1442 287 1442 291 1443 291 1443 297 1444 297 1444 285 1446 285 1446 280 1447 280 1447 281 1448 281 1448 285 1449 285 1449 286 1450 286 1450 296 1451 296 1451 299 1452 299 1452 310 1453 310 1453 288 1454 288 1454 290 1455 290 1455 289 1456 289 1456 288 1457 288 1457 289 1458 289 1458 284 1459 284 1459 280 1460 280 1460 285 1461 285 1461 287 1462 287 1462 283 1463 283 1463 284 1465 284 1465 271 1466 271 1466 277 1467 277 1467 286 1468 286 1468 277 1469 277 1469 290 1470 290 1470 281 1471 281 1471 283 1472 283 1472 285 1473 285 1473 304 1474 304 1474 288 1475 288 1475 290 1476 290 1476 285 1477 285 1477 291 1478 291 1478 277 1479 277 1479 285 1480 285 1480 284 1481 284 1481 300 1482 300 1482 286 1483 286 1483 285 1484 285 1484 282 1485 282 1485 286 1486 286 1486 275 1487 275 1487 274 1488 274 1488 277 1489 277 1489 285 1490 285 1490 299 1491 299 1491 282 1492 282 1492 279 1493 279 1493 286 1494 286 1494 282 1495 282 1495 295 1496 295 1496 292 1497 292 1497 284 1498 284 1498 285 1499 285 1499 295 1500 295 1500 286 1501 286 1501 288 1502 288 1502 287 1503 287 1503 282 1504 282 1504 275 1505 275 1505 277 1506 277 1506 282 1507 282 1507 278 1508 278 1508 282 1509 282 1509 278 1510 278 1510 280 1511 280 1511 290 1512 290 1512 284 1513 284 1513 295 1515 295 1515 281 1516 281 1516 278 1518 278 1518 299 1519 299 1519 286 1520 286 1520 287 1521 287 1521 289 1522 289 1522 297 1523 297 1523 289 1524 289 1524 283 1525 283 1525 278 1526 278 1526 289 1527 289 1527 297 1528 297 1528 289 1529 289 1529 288 1530 288 1530 279 1531 279 1531 287 1532 287 1532 294 1533 294 1533 289 1534 289 1534 284 1535 284 1535 279 1536 279 1536 290 1537 290 1537 281 1538 281 1538 290 1539 290 1539 289 1540 289 1540 283 1541 283 1541 282 1542 282 1542 273 1543 273 1543 280 1544 280 1544 278 1545 278 1545 275 1546 275 1546 279 1547 279 1547 282 1548 282 1548 288 1549 288 1549 283 1550 283 1550 276 1551 276 1551 287 1552 287 1552 288 1553 288 1553 302 1554 302 1554 290 1555 290 1555 284 1556 284 1556 277 1557 277 1557 281 1558 281 1558 282 1559 282 1559 296 1560 296 1560 286 1561 286 1561 283 1562 283 1562 292 1563 292 1563 304 1564 304 1564 281 1565 281 1565 283 1566 283 1566 295 1567 295 1567 281 1568 281 1568 286 1569 286 1569 288 1570 288 1570 285 1571 285 1571 281 1572 281 1572 284 1573 284 1573 289 1574 289 1574 297 1575 297 1575 296 1576 296 1576 277 1577 277 1577 284 1578 284 1578 274 1579 274 1579 273 1580 273 1580 288 1581 288 1581 273 1582 273 1582 283 1583 283 1583 281 1584 281 1584 283 1585 283 1585 282 1586 282 1586 287 1587 287 1587 286 1589 286 1589 279 1591 279 1591 278 1592 278 1592 279 1593 279 1593 274 1595 274 1595 278 1597 278 1597 280 1598 280 1598 282 1599 282 1599 277 1600 277 1600 284 1601 284 1601 278 1602 278 1602 288 1603 288 1603 280 1604 280 1604 282 1605 282 1605 276 1606 276 1606 281 1607 281 1607 275 1608 275 1608 276 1609 276 1609 291 1610 291 1610 281 1611 281 1611 278 1613 278 1613 303 1615 303 1615 304 1616 304 1616 305 1617 305 1617 302 1618 302 1618 300 1619 300 1619 299 1620 299 1620 304 1621 304 1621 302 1622 302 1622 300 1623 300 1623 304 1624 304 1624 302 1626 302 1626 307 1628 307 1628 304 1629 304 1629 307 1630 307 1630 315 1631 315 1631 318 1632 318 1632 319 1633 319 1633 315 1634 315 1634 322 1635 322 1635 323 1636 323 1636 322 1637 322 1637 324 1638 324 1638 320 1639 320 1639 322 1640 322 1640 326 1641 326 1641 327 1642 327 1642 325 1644 325 1644 329 1648 329 1648 331 1649 331 1649 329 1650 329 1650 327 1651 327 1651 331 1652 331 1652 330 1653 330 1653 328 1654 328 1654 329 1656 329 1656 333 1657 333 1657 329 1658 329 1658 330 1659 330 1659 333 1660 333 1660 335 1661 335 1661 334 1662 334 1662 336 1663 336 1663 331 1664 331 1664 336 1665 336 1665 334 1666 334 1666 335 1667 335 1667 332 1668 332 1668 336 1669 336 1669 337 1671 337 1671 338 1672 338 1672 339 1676 339 1676 337 1677 337 1677 339 1678 339 1678 341 1679 341 1679 345 1680 345 1680 347 1681 347 1681 350 1682 350 1682 352 1683 352 1683 353 1684 353 1684 355 1713 355 1713 355 1684 355 1684 357 1683 357 1683 358 1682 358 1682 360 1681 360 1681 363 1680 363 1680 365 1679 365 1679 369 1678 369 1678 371 1677 371 1677 373 1676 373 1676 374 1675 374 1675 373 1674 373 1674 371 1673 371 1673 373 1672 373 1672 374 1671 374 1671 373 1669 373 1669 377 1668 377 1668 374 1667 374 1667 375 1666 375 1666 378 1665 378 1665 375 1664 375 1664 374 1663 374 1663 376 1662 376 1662 375 1661 375 1661 377 1658 377 1658 381 1657 381 1657 377 1656 377 1656 378 1654 378 1654 379 1653 379 1653 380 1652 380 1652 381 1651 381 1651 380 1650 380 1650 381 1649 381 1649 384 1648 384 1648 383 1647 383 1647 381 1646 381 1646 382 1644 382 1644 385 1643 385 1643 382 1642 382 1642 386 1641 386 1641 384 1640 384 1640 389 1639 389 1639 386 1638 386 1638 389 1637 389 1637 386 1636 386 1636 387 1635 387 1635 390 1634 390 1634 394 1633 394 1633 392 1632 392 1632 393 1631 393 1631 395 1630 395 1630 402 1629 402 1629 403 1628 403 1628 407 1627 407 1627 405 1625 405 1625 407 1623 407 1623 408 1622 408 1622 405 1621 405 1621 407 1620 407 1620 408 1619 408 1619 411 1617 411 1617 405 1615 405 1615 406 1614 406 1614 407 1613 407 1613 410 1612 410 1612 413 1611 413 1611 422 1610 422 1610 430 1609 430 1609 432 1608 432 1608 430 1607 430 1607 427 1606 427 1606 430 1605 430 1605 426 1604 426 1604 435 1603 435 1603 429 1602 429 1602 436 1601 436 1601 430 1600 430 1600 424 1599 424 1599 426 1598 426 1598 413 1597 413 1597 421 1596 421 1596 425 1595 425 1595 422 1594 422 1594 424 1593 424 1593 428 1592 428 1592 429 1591 429 1591 430 1590 430 1590 424 1589 424 1589 425 1588 425 1588 424 1586 424 1586 418 1585 418 1585 425 1584 425 1584 420 1582 420 1582 425 1581 425 1581 424 1580 424 1580 423 1579 423 1579 424 1578 424 1578 422 1577 422 1577 425 1576 425 1576 433 1574 433 1574 430 1573 430 1573 432 1572 432 1572 435 1571 435 1571 431 1570 431 1570 425 1569 425 1569 423 1568 423 1568 431 1567 431 1567 432 1566 432 1566 429 1565 429 1565 434 1564 434 1564 411 1563 411 1563 425 1562 425 1562 422 1561 422 1561 428 1560 428 1560 427 1559 427 1559 429 1558 429 1558 425 1557 425 1557 422 1556 422 1556 429 1555 429 1555 417 1554 417 1554 423 1553 423 1553 409 1552 409 1552 415 1551 415 1551 434 1550 434 1550 429 1549 429 1549 427 1548 427 1548 422 1547 422 1547 423 1546 423 1546 427 1544 427 1544 428 1543 428 1543 427 1542 427 1542 429 1541 429 1541 425 1540 425 1540 427 1539 427 1539 421 1538 421 1538 429 1535 429 1535 428 1533 428 1533 432 1532 432 1532 428 1531 428 1531 426 1530 426 1530 423 1527 423 1527 424 1525 424 1525 422 1524 422 1524 430 1523 430 1523 423 1522 423 1522 425 1521 425 1521 429 1520 429 1520 423 1519 423 1519 435 1517 435 1517 432 1516 432 1516 429 1515 429 1515 427 1514 427 1514 434 1512 434 1512 430 1511 430 1511 424 1510 424 1510 423 1509 423 1509 426 1508 426 1508 422 1507 422 1507 428 1506 428 1506 422 1505 422 1505 423 1504 423 1504 412 1503 412 1503 417 1502 417 1502 430 1501 430 1501 425 1500 425 1500 422 1499 422 1499 439 1498 439 1498 425 1497 425 1497 428 1495 428 1495 426 1494 426 1494 420 1493 420 1493 427 1492 427 1492 418 1491 418 1491 434 1489 434 1489 433 1488 433 1488 434 1487 434 1487 429 1486 429 1486 433 1485 433 1485 427 1484 427 1484 423 1483 423 1483 420 1482 420 1482 424 1481 424 1481 415 1480 415 1480 416 1479 416 1479 417 1478 417 1478 424 1477 424 1477 415 1476 415 1476 426 1475 426 1475 428 1474 428 1474 418 1473 418 1473 422 1472 422 1472 417 1471 417 1471 419 1469 419 1469 411 1468 411 1468 428 1467 428 1467 427 1466 427 1466 431 1465 431 1465 430 1464 430 1464 420 1463 420 1463 435 1462 435 1462 424 1461 424 1461 421 1460 421 1460 425 1459 425 1459 422 1458 422 1458 426 1457 426 1457 425 1456 425 1456 418 1455 418 1455 414 1454 414 1454 419 1453 419 1453 421 1452 421 1452 402 1451 402 1451 420 1450 420 1450 422 1449 422 1449 419 1448 419 1448 423 1447 423 1447 421 1446 421 1446 423 1445 423 1445 419 1444 419 1444 429 1443 429 1443 422 1442 422 1442 427 1441 427 1441 421 1440 421 1440 426 1439 426 1439 433 1438 433 1438 420 1437 420 1437 426 1436 426 1436 432 1435 432 1435 430 1434 430 1434 429 1433 429 1433 422 1432 422 1432 424 1431 424 1431 425 1430 425 1430 422 1429 422 1429 419 1428 419 1428 420 1427 420 1427 422 1426 422 1426 420 1424 420 1424 426 1423 426 1423 411 1422 411 1422 431 1421 431 1421 432 1420 432 1420 434 1419 434 1419 437 1417 437 1417 438 1416 438 1416 431 1415 431 1415 424 1414 424 1414 425 1412 425 1412 412 1411 412 1411 426 1410 426 1410 423 1409 423 1409 429 1407 429 1407 420 1406 420 1406 424 1405 424 1405 428 1404 428 1404 423 1403 423 1403 420 1402 420 1402 429 1401 429 1401 427 1400 427 1400 426 1399 426 1399 437 1398 437 1398 428 1397 428 1397 420 1396 420 1396 414 1395 414 1395 426 1394 426 1394 422 1393 422 1393 429 1392 429 1392 431 1391 431 1391 435 1390 435 1390 429 1389 429 1389 431 1388 431 1388 429 1387 429 1387 425 1386 425 1386 422 1385 422 1385 418 1384 418 1384 408 1383 408 1383 417 1382 417 1382 420 1381 420 1381 428 1380 428 1380 427 1379 427 1379 430 1378 430 1378 413 1377 413 1377 426 1376 426 1376 420 1375 420 1375 407 1374 407 1374 415 1373 415 1373 423 1372 423 1372 424 1371 424 1371 422 1370 422 1370 417 1369 417 1369 424 1368 424 1368 419 1367 419 1367 418 1365 418 1365 423 1364 423 1364 424 1363 424 1363 413 1362 413 1362 421 1361 421 1361 422 1360 422 1360 415 1359 415 1359 421 1358 421 1358 412 1357 412 1357 426 1356 426 1356 423 1355 423 1355 418 1354 418 1354 423 1353 423 1353 427 1352 427 1352 426 1351 426 1351 420 1350 420 1350 425 1349 425 1349 429 1348 429 1348 432 1347 432 1347 424 1346 424 1346 434 1345 434 1345 426 1344 426 1344 425 1343 425 1343 428 1342 428 1342 427 1341 427 1341 424 1340 424 1340 429 1339 429 1339 425 1338 425 1338 411 1337 411 1337 426 1335 426 1335 433 1334 433 1334 435 1333 435 1333 430 1332 430 1332 413 1331 413 1331 427 1330 427 1330 425 1329 425 1329 429 1328 429 1328 431 1327 431 1327 412 1326 412 1326 431 1325 431 1325 427 1324 427 1324 429 1323 429 1323 435 1322 435 1322 436 1321 436 1321 432 1320 432 1320 427 1319 427 1319 432 1317 432 1317 433 1316 433 1316 428 1315 428 1315 427 1314 427 1314 426 1313 426 1313 427 1312 427 1312 424 1311 424 1311 421 1310 421 1310 420 1309 420 1309 416 1308 416 1308 422 1307 422 1307 413 1306 413 1306 421 1305 421 1305 426 1304 426 1304 432 1303 432 1303 426 1301 426 1301 425 1300 425 1300 413 1299 413 1299 429 1298 429 1298 428 1297 428 1297 409 1296 409 1296 427 1295 427 1295 421 1294 421 1294 423 1291 423 1291 418 1290 418 1290 430 1289 430 1289 419 1288 419 1288 413 1287 413 1287 405 1286 405 1286 416 1285 416 1285 418 1284 418 1284 420 1283 420 1283 428 1282 428 1282 425 1281 425 1281 430 1280 430 1280 429 1279 429 1279 425 1278 425 1278 424 1276 424 1276 422 1275 422 1275 417 1274 417 1274 428 1273 428 1273 431 1272 431 1272 425 1270 425 1270 428 1269 428 1269 424 1268 424 1268 419 1267 419 1267 403 1266 403 1266 422 1265 422 1265 415 1264 415 1264 428 1263 428 1263 422 1262 422 1262 425 1261 425 1261 426 1260 426 1260 412 1259 412 1259 418 1258 418 1258 412 1257 412 1257 425 1256 425 1256 405 1255 405 1255 404 1254 404 1254 421 1253 421 1253 424 1252 424 1252 425 1251 425 1251 415 1250 415 1250 432 1249 432 1249 422 1248 422 1248 425 1247 425 1247 429 1246 429 1246 428 1244 428 1244 425 1243 425 1243 427 1242 427 1242 435 1241 435 1241 426 1240 426 1240 422 1238 422 1238 420 1237 420 1237 425 1236 425 1236 417 1235 417 1235 425 1234 425 1234 428 1233 428 1233 421 1232 421 1232 441 1231 441 1231 431 1230 431 1230 429 1229 429 1229 431 1228 431 1228 430 1227 430 1227 427 1226 427 1226 420 1225 420 1225 403 1224 403 1224 418 1223 418 1223 421 1221 421 1221 406 1220 406 1220 427 1219 427 1219 433 1218 433 1218 434 1217 434 1217 436 1216 436 1216 433 1215 433 1215 425 1214 425 1214 427 1212 427 1212 424 1211 424 1211 423 1210 423 1210 425 1209 425 1209 423 1208 423 1208 425 1207 425 1207 432 1206 432 1206 433 1205 433 1205 438 1204 438 1204 434 1203 434 1203 425 1202 425 1202 431 1201 431 1201 419 1199 419 1199 425 1198 425 1198 424 1197 424 1197 428 1196 428 1196 423 1195 423 1195 426 1194 426 1194 423 1193 423 1193 417 1192 417 1192 410 1191 410 1191 422 1190 422 1190 425 1189 425 1189 431 1188 431 1188 429 1187 429 1187 434 1186 434 1186 451 1185 451 1185 441 1184 441 1184 438 1183 438 1183 434 1181 434 1181 435 1180 435 1180 438 1179 438 1179 440 1178 440 1178 439 1177 439 1177 444 1176 444 1176 440 1175 440 1175 438 1174 438 1174 440 1173 440 1173 442 1172 442 1172 438 1170 438 1170 435 1168 435 1168 436 1167 436 1167 440 1165 440 1165 431 1163 431 1163 428 1161 428 1161 433 1160 433 1160 430 1159 430 1159 434 1157 434 1157 435 1155 435 1155 417 1154 417 1154 419 1153 419 1153 424 1152 424 1152 432 1151 432 1151 431 1150 431 1150 428 1149 428 1149 429 1148 429 1148 423 1147 423 1147 437 1146 437 1146 433 1145 433 1145 430 1144 430 1144 423 1143 423 1143 419 1142 419 1142 417 1141 417 1141 420 1140 420 1140 412 1139 412 1139 421 1138 421 1138 424 1137 424 1137 419 1136 419 1136 429 1135 429 1135 427 1134 427 1134 423 1133 423 1133 426 1131 426 1131 432 1130 432 1130 434 1129 434 1129 436 1128 436 1128 450 1127 450 1127 452 1126 452 1126 446 1125 446 1125 426 1124 426 1124 430 1123 430 1123 439 1122 439 1122 430 1121 430 1121 435 1120 435 1120 434 1119 434 1119 424 1117 424 1117 430 1116 430 1116 428 1115 428 1115 429 1114 429 1114 433 1113 433 1113 426 1112 426 1112 428 1111 428 1111 421 1110 421 1110 431 1109 431 1109 420 1108 420 1108 437 1107 437 1107 431 1106 431 1106 430 1105 430 1105 433 1104 433 1104 416 1103 416 1103 427 1102 427 1102 421 1101 421 1101 422 1100 422 1100 416 1099 416 1099 426 1098 426 1098 427 1097 427 1097 428 1096 428 1096 426 1095 426 1095 424 1094 424 1094 432 1093 432 1093 437 1092 437 1092 428 1091 428 1091 431 1090 431 1090 428 1089 428 1089 419 1088 419 1088 425 1087 425 1087 422 1083 422 1083 427 1082 427 1082 422 1080 422 1080 425 1079 425 1079 415 1078 415 1078 420 1077 420 1077 424 1076 424 1076 427 1075 427 1075 425 1074 425 1074 421 1073 421 1073 419 1072 419 1072 424 1071 424 1071 425 1069 425 1069 423 1068 423 1068 434 1067 434 1067 433 1066 433 1066 429 1065 429 1065 424 1064 424 1064 428 1063 428 1063 429 1062 429 1062 434 1061 434 1061 421 1060 421 1060 423 1059 423 1059 427 1058 427 1058 433 1057 433 1057 429 1056 429 1056 434 1055 434 1055 422 1054 422 1054 430 1053 430 1053 415 1052 415 1052 423 1051 423 1051 412 1050 412 1050 425 1049 425 1049 424 1048 424 1048 430 1047 430 1047 435 1046 435 1046 432 1045 432 1045 430 1044 430 1044 432 1043 432 1043 418 1042 418 1042 430 1041 430 1041 435 1040 435 1040 428 1039 428 1039 425 1038 425 1038 420 1037 420 1037 422 1036 422 1036 425 1035 425 1035 426 1034 426 1034 431 1033 431 1033 422 1032 422 1032 423 1031 423 1031 420 1030 420 1030 423 1029 423 1029 425 1028 425 1028 421 1027 421 1027 419 1026 419 1026 425 1025 425 1025 430 1024 430 1024 429 1023 429 1023 428 1022 428 1022 424 1021 424 1021 426 1020 426 1020 427 1019 427 1019 428 1018 428 1018 430 1017 430 1017 431 1016 431 1016 430 1015 430 1015 429 1014 429 1014 423 1013 423 1013 422 1012 422 1012 419 1011 419 1011 416 1010 416 1010 397 1009 397 1009 420 1008 420 1008 424 1007 424 1007 419 1006 419 1006 423 1005 423 1005 422 1004 422 1004 424 1003 424 1003 426 1002 426 1002 420 1001 420 1001 423 999 423 999 417 998 417 998 433 997 433 997 431 996 431 996 421 995 421 995 429 994 429 994 427 993 427 993 425 992 425 992 427 991 427 991 421 990 421 990 422 989 422 989 426 988 426 988 428 987 428 987 431 986 431 986 432 985 432 985 426 984 426 984 428 983 428 983 424 982 424 982 432 981 432 981 418 980 418 980 415 979 415 979 417 978 417 978 423 977 423 977 410 976 410 976 413 975 413 975 425 974 425 974 430 973 430 973 421 972 421 972 418 971 418 971 425 970 425 970 428 969 428 969 431 968 431 968 424 967 424 967 429 966 429 966 423 965 423 965 426 964 426 964 431 963 431 963 433 962 433 962 429 961 429 961 432 960 432 960 419 959 419 959 418 958 418 958 420 957 420 957 421 956 421 956 411 954 411 954 419 952 419 952 416 950 416 950 410 949 410 949 412 948 412 948 403 947 403 947 405 946 405 946 417 945 417 945 405 944 405 944 407 943 407 943 399 942 399 942 416 941 416 941 415 940 415 940 407 939 407 939 413 937 413 937 414 936 414 936 417 935 417 935 426 934 426 934 411 933 411 933 409 932 409 932 406 931 406 931 405 930 405 930 413 929 413 929 407 928 407 928 400 927 400 927 414 926 414 926 408 925 408 925 394 924 394 924 408 923 408 923 394 922 394 922 405 921 405 921 407 920 407 920 405 919 405 919 414 918 414 918 405 917 405 917 403 916 403 916 402 915 402 915 409 914 409 914 404 913 404 913 409 912 409 912 403 911 403 911 408 910 408 910 402 909 402 909 415 908 415 908 405 907 405 907 414 906 414 906 415 905 415 905 412 904 412 904 415 903 415 903 423 902 423 902 422 901 422 901 417 900 417 900 424 899 424 899 418 898 418 898 402 897 402 897 415 896 415 896 429 895 429 895 425 894 425 894 410 893 410 893 425 892 425 892 415 890 415 890 419 889 419 889 422 888 422 888 410 887 410 887 420 885 420 885 421 883 421 883 420 882 420 882 413 881 413 881 419 880 419 880 424 879 424 879 427 878 427 878 423 877 423 877 419 876 419 876 421 875 421 875 427 874 427 874 421 873 421 873 422 872 422 872 419 871 419 871 423 870 423 870 421 869 421 869 405 868 405 868 432 867 432 867 429 866 429 866 428 865 428 865 422 864 422 864 424 863 424 863 428 862 428 862 427 861 427 861 424 860 424 860 425 858 425 858 411 857 411 857 428 856 428 856 423 855 423 855 422 854 422 854 421 853 421 853 413 852 413 852 423 851 423 851 422 850 422 850 426 849 426 849 419 848 419 848 426 847 426 847 408 846 408 846 422 844 422 844 420 843 420 843 419 842 419 842 428 841 428 841 424 840 424 840 428 839 428 839 434 838 434 838 427 837 427 837 434 836 434 836 433 835 433 835 434 834 434 834 424 833 424 833 428 832 428 832 429 831 429 831 430 830 430 830 423 829 423 829 424 828 424 828 427 827 427 827 425 826 425 826 420 825 420 825 411 824 411 824 429 823 429 823 431 822 431 822 424 821 424 821 431 820 431 820 429 818 429 818 425 817 425 817 426 816 426 816 430 815 430 815 431 814 431 814 420 813 420 813 437 812 437 812 427 811 427 811 420 810 420 810 428 809 428 809 423 807 423 807 425 806 425 806 422 805 422 805 417 804 417 804 425 803 425 803 426 802 426 802 417 800 417 800 431 799 431 799 428 798 428 798 413 797 413 797 426 796 426 796 423 795 423 795 429 794 429 794 431 793 431 793 436 792 436 792 430 791 430 791 423 790 423 790 432 788 432 788 434 787 434 787 425 786 425 786 420 785 420 785 405 784 405 784 423 783 423 783 418 782 418 782 420 781 420 781 423 780 423 780 437 779 437 779 430 778 430 778 429 777 429 777 432 776 432 776 430 775 430 775 425 774 425 774 420 772 420 772 418 771 418 771 407 770 407 770 417 769 417 769 416 768 416 768 420 766 420 766 422 765 422 765 431 764 431 764 425 762 425 762 409 761 409 761 414 760 414 760 422 759 422 759 418 758 418 758 410 757 410 757 419 756 419 756 411 755 411 755 425 754 425 754 404 753 404 753 418 752 418 752 433 751 433 751 425 750 425 750 405 749 405 749 417 748 417 748 423 747 423 747 414 746 414 746 422 745 422 745 415 744 415 744 425 743 425 743 433 742 433 742 423 741 423 741 426 740 426 740 435 739 435 739 419 738 419 738 428 737 428 737 427 736 427 736 428 735 428 735 425 734 425 734 429 733 429 733 438 732 438 732 423 731 423 731 429 730 429 730 432 729 432 729 430 728 430 728 433 727 433 727 431 726 431 726 436 725 436 725 437 724 437 724 428 723 428 723 430 722 430 722 427 721 427 721 420 720 420 720 425 718 425 718 424 717 424 717 416 716 416 716 427 715 427 715 429 714 429 714 433 713 433 713 421 712 421 712 420 711 420 711 417 710 417 710 422 709 422 709 430 708 430 708 434 707 434 707 431 706 431 706 436 704 436 704 433 703 433 703 430 702 430 702 422 701 422 701 415 700 415 700 431 699 431 699 432 698 432 698 425 697 425 697 408 696 408 696 427 695 427 695 417 694 417 694 422 693 422 693 432 692 432 692 434 691 434 691 427 688 427 688 433 687 433 687 437 686 437 686 440 685 440 685 432 684 432 684 424 683 424 683 422 682 422 682 430 681 430 681 424 680 424 680 428 679 428 679 430 678 430 678 432 677 432 677 426 676 426 676 414 675 414 675 419 674 419 674 431 673 431 673 420 672 420 672 416 671 416 671 421 669 421 669 417 668 417 668 420 666 420 666 426 665 426 665 410 664 410 664 430 663 430 663 431 662 431 662 432 661 432 661 426 660 426 660 423 659 423 659 425 658 425 658 419 657 419 657 426 656 426 656 420 655 420 655 428 654 428 654 422 653 422 653 425 652 425 652 431 651 431 651 425 650 425 650 429 649 429 649 407 648 407 648 412 647 412 647 425 646 425 646 437 645 437 645 420 644 420 644 424 643 424 643 429 642 429 642 433 641 433 641 427 640 427 640 421 639 421 639 418 638 418 638 414 637 414 637 422 636 422 636 428 635 428 635 419 634 419 634 430 633 430 633 433 632 433 632 436 631 436 631 434 630 434 630 433 629 433 629 439 628 439 628 437 627 437 627 428 626 428 626 426 625 426 625 423 624 423 624 422 623 422 623 425 622 425 622 426 621 426 621 428 620 428 620 416 619 416 619 432 618 432 618 438 617 438 617 428 616 428 616 421 615 421 615 435 614 435 614 425 613 425 613 426 612 426 612 427 611 427 611 421 610 421 610 423 609 423 609 417 608 417 608 428 607 428 607 431 606 431 606 428 605 428 605 414 604 414 604 419 603 419 603 431 601 431 601 424 600 424 600 427 599 427 599 425 598 425 598 427 596 427 596 418 595 418 595 419 594 419 594 423 593 423 593 410 592 410 592 426 591 426 591 423 590 423 590 428 589 428 589 427 588 427 588 425 587 425 587 429 586 429 586 430 585 430 585 417 584 417 584 427 583 427 583 432 582 432 582 431 581 431 581 426 580 426 580 423 579 423 579 427 578 427 578 429 577 429 577 430 576 430 576 429 575 429 575 428 574 428 574 421 573 421 573 423 572 423 572 427 571 427 571 421 570 421 570 420 569 420 569 425 568 425 568 442 567 442 567 434 566 434 566 430 564 430 564 438 563 438 563 436 562 436 562 432 560 432 560 428 559 428 559 426 558 426 558 430 557 430 557 431 556 431 556 420 555 420 555 427 554 427 554 421 553 421 553 424 552 424 552 426 551 426 551 429 550 429 550 427 549 427 549 426 547 426 547 415 546 415 546 427 545 427 545 414 544 414 544 415 543 415 543 418 542 418 542 411 541 411 541 402 540 402 540 427 539 427 539 425 538 425 538 420 537 420 537 423 536 423 536 431 534 431 534 434 533 434 533 426 532 426 532 420 531 420 531 412 530 412 530 425 529 425 529 426 528 426 528 424 527 424 527 428 526 428 526 425 525 425 525 417 524 417 524 424 523 424 523 427 522 427 522 428 520 428 520 426 519 426 519 425 518 425 518 426 516 426 516 425 515 425 515 426 514 426 514 431 513 431 513 439 512 439 512 429 511 429 511 424 509 424 509 431 508 431 508 430 507 430 507 425 506 425 506 422 505 422 505 407 504 407 504 417 503 417 503 423 500 423 500 422 499 422 499 419 498 419 498 433 497 433 497 429 496 429 496 428 495 428 495 441 494 441 494 416 493 416 493 427 492 427 492 431 491 431 491 437 490 437 490 430 489 430 489 424 488 424 488 423 487 423 487 422 486 422 486 425 485 425 485 432 483 432 483 424 482 424 482 425 481 425 481 424 480 424 480 430 479 430 479 423 478 423 478 426 477 426 477 431 476 431 476 428 475 428 475 429 474 429 474 432 473 432 473 430 472 430 472 431 471 431 471 427 470 427 470 424 469 424 469 429 468 429 468 408 467 408 467 430 466 430 466 435 465 435 465 430 464 430 464 428 463 428 463 423 462 423 462 430 461 430 461 415 460 415 460 429 459 429 459 422 458 422 458 430 457 430 457 431 456 431 456 424 455 424 455 431 454 431 454 423 453 423 453 424 452 424 452 423 451 423 451 424 450 424 450 431 449 431 449 426 447 426 447 431 446 431 446 436 445 436 445 426 444 426 444 419 443 419 443 425 442 425 442 423 441 423 441 433 440 433 440 431 439 431 439 436 438 436 438 434 437 434 437 428 436 428 436 431 435 431 435 428 434 428 434 431 433 431 433 434 432 434 432 424 431 424 431 428 430 428 430 422 429 422 429 419 428 419 428 412 427 412 427 416 426 416 426 414 425 414 425 399 424 399 424 416 423 416 423 411 422 411 422 422 420 422 420 421 419 421 419 410 418 410 418 431 417 431 417 429 416 429 416 428 415 428 415 426 414 426 414 429 413 429 413 425 412 425 412 424 411 424 411 429 410 429 410 427 409 427 409 426 408 426 408 428 407 428 407 424 406 424 406 430 405 430 405 423 404 423 404 419 403 419 403 430 402 430 402 428 400 428 400 423 399 423 399 422 398 422 398 419 397 419 397 417 396 417 396 424 395 424 395 423 394 423 394 430 393 430 393 417 392 417 392 413 391 413 391 417 390 417 390 422 389 422 389 426 388 426 388 429 387 429 387 423 386 423 386 426 385 426 385 425 384 425 384 429 383 429 383 422 382 422 382 424 380 424 380 425 379 425 379 418 378 418 378 420 376 420 376 421 375 421 375 430 374 430 374 427 372 427 372 425 370 425 370 430 369 430 369 426 368 426 368 428 367 428 367 424 366 424 366 415 365 415 365 427 364 427 364 414 363 414 363 433 362 433 362 429 361 429 361 432 360 432 360 425 359 425 359 426 358 426 358 425 357 425 357 426 356 426 356 427 354 427 354 425 353 425 353 422 352 422 352 420 351 420 351 411 350 411 350 430 349 430 349 420 348 420 348 428 347 428 347 412 346 412 346 414 345 414 345 421 344 421 344 417 342 417 342 411 341 411 341 416 340 416 340 418 339 418 339 414 338 414 338 394 337 394 337 411 336 411 336 416 335 416 335 404 334 404 334 419 333 419 333 428 332 428 332 427 331 427 331 420 330 420 330 422 329 422 329 424 328 424 328 425 327 425 327 422 326 422 326 419 325 419 325 417 324 417 324 410 323 410 323 418 322 418 322 416 321 416 321 419 320 419 320 418 319 418 319 417 317 417 317 418 316 418 316 420 315 420 315 425 314 425 314 421 313 421 313 427 312 427 312 394 311 394 311 420 310 420 310 414 309 414 309 415 308 415 308 414 307 414 307 415 306 415 306 416 304 416 304 420 303 420 303 416 302 416 302 404 301 404 301 414 300 414 300 394 298 394 298 395 297 395 297 393 296 393 296 394 295 394 295 397 294 397 294 392 293 392 293 400 292 400 292 397 291 397 291 402 290 402 290 396 289 396 289 394 288 394 288 392 287 392 287 389 286 389 286 390 285 390 285 394 283 394 283 390 282 390 282 403 281 403 281 401 278 401 278 399 277 399 277 403 276 403 276 405 275 405 275 402 274 402 274 400 273 400 273 403 272 403 272 396 271 396 271 388 270 388 270 398 269 398 269 388 268 388 268 400 267 400 267 404 266 404 266 402 265 402 265 403 264 403 264 404 263 404 263 399 262 399 262 402 261 402 261 400 260 400 260 399 259 399 259 396 258 396 258 399 257 399 257 396 256 396 256 394 255 394 255 395 254 395 254 394 253 394 253 392 252 392 252 398 251 398 251 396 250 396 250 400 249 400 249 398 248 398 248 394 247 394 247 395 246 395 246 396 245 396 245 395 244 395 244 387 243 387 243 388 242 388 242 392 241 392 241 389 240 389 240 388 239 388 239 392 237 392 237 395 236 395 236 394 235 394 235 391 233 391 233 392 232 392 232 396 231 396 231 394 230 394 230 383 229 383 229 377 228 377 228 378 227 378 227 391 226 391 226 395 225 395 225 393 224 393 224 399 223 399 223 401 222 401 222 391 221 391 221 392 220 392 220 388 218 388 218 390 217 390 217 392 216 392 216 390 215 390 215 382 214 382 214 388 213 388 213 390 212 390 212 387 211 387 211 389 210 389 210 377 209 377 209 374 208 374 208 355 206 355Z" fill="#7a7edb"/><path d="M206 704 208 704 208 639 209 639 209 616 210 616 210 581 211 581 211 657 212 657 212 590 213 590 213 662 214 662 214 579 215 579 215 581 216 581 216 588 218 588 218 581 219 581 219 587 220 587 220 586 221 586 221 585 222 585 222 592 223 592 223 586 224 586 224 577 225 577 225 563 226 563 226 577 227 577 227 576 228 576 228 584 229 584 229 544 230 544 230 622 231 622 231 533 233 533 233 612 234 612 234 588 235 588 235 533 236 533 236 540 237 540 237 533 244 533 244 538 245 538 245 620 246 620 246 539 247 539 247 533 248 533 248 558 249 558 249 539 250 539 250 562 251 562 251 546 252 546 252 565 253 565 253 613 254 613 254 533 255 533 255 557 256 557 256 565 257 565 257 542 258 542 258 540 259 540 259 621 260 621 260 549 261 549 261 561 262 561 262 571 263 571 263 565 264 565 264 552 265 552 265 588 266 588 266 566 267 566 267 556 268 556 268 565 269 565 269 570 271 570 271 567 272 567 272 561 273 561 273 566 274 566 274 589 275 589 275 585 276 585 276 559 277 559 277 536 278 536 278 539 279 539 279 533 281 533 281 534 282 534 282 593 283 593 283 544 284 544 284 533 285 533 285 536 286 536 286 592 287 592 287 533 288 533 288 616 289 616 289 533 290 533 290 545 291 545 291 548 292 548 292 546 293 546 293 538 294 538 294 624 295 624 295 544 296 544 296 533 298 533 298 613 299 613 299 544 300 544 300 533 311 533 311 549 312 549 312 533 332 533 332 551 333 551 333 533 341 533 341 561 342 561 342 533 379 533 379 547 380 547 380 533 424 533 424 535 425 535 425 533 484 533 484 554 485 554 485 533 702 533 702 577 703 577 703 533 897 533 897 567 898 567 898 533 914 533 914 570 915 570 915 533 920 533 920 562 921 562 921 533 927 533 927 570 928 570 928 533 932 533 932 567 933 567 933 533 951 533 951 558 952 558 952 533 988 533 988 547 989 547 989 533 997 533 997 545 998 545 998 533 1205 533 1205 550 1206 550 1206 533 1348 533 1348 579 1349 579 1349 533 1385 533 1385 574 1386 574 1386 533 1613 533 1613 592 1615 592 1615 574 1616 574 1616 583 1617 583 1617 533 1621 533 1621 582 1622 582 1622 533 1630 533 1630 588 1631 588 1631 585 1632 585 1632 595 1633 595 1633 589 1634 589 1634 601 1635 601 1635 606 1636 606 1636 608 1637 608 1637 609 1638 609 1638 616 1639 616 1639 617 1640 617 1640 618 1641 618 1641 616 1642 616 1642 618 1643 618 1643 622 1644 622 1644 619 1645 619 1645 626 1646 626 1646 629 1648 629 1648 633 1649 633 1649 634 1650 634 1650 635 1651 635 1651 626 1652 626 1652 634 1654 634 1654 627 1655 627 1655 626 1656 626 1656 634 1657 634 1657 633 1659 633 1659 629 1660 629 1660 642 1661 642 1661 634 1662 634 1662 629 1663 629 1663 643 1664 643 1664 634 1665 634 1665 642 1666 642 1666 637 1667 637 1667 633 1668 633 1668 643 1669 643 1669 640 1670 640 1670 647 1671 647 1671 646 1672 646 1672 647 1673 647 1673 646 1675 646 1675 649 1676 649 1676 659 1677 659 1677 670 1678 670 1678 676 1679 676 1679 685 1680 685 1680 693 1681 693 1681 696 1682 696 1682 699 1683 699 1683 701 1684 701 1684 702 1685 702 1685 703 1713 703 1713 705 1685 705 1685 706 1684 706 1684 707 1683 707 1683 709 1682 709 1682 712 1681 712 1681 715 1680 715 1680 723 1679 723 1679 732 1678 732 1678 738 1677 738 1677 749 1676 749 1676 759 1675 759 1675 770 1674 770 1674 767 1673 767 1673 770 1672 770 1672 772 1671 772 1671 769 1668 769 1668 775 1666 775 1666 763 1665 763 1665 770 1664 770 1664 771 1663 771 1663 775 1662 775 1662 769 1661 769 1661 778 1660 778 1660 774 1659 774 1659 770 1658 770 1658 782 1657 782 1657 779 1656 779 1656 775 1655 775 1655 778 1654 778 1654 784 1653 784 1653 774 1652 774 1652 783 1651 783 1651 788 1650 788 1650 778 1649 778 1649 787 1648 787 1648 788 1647 788 1647 778 1646 778 1646 782 1645 782 1645 791 1644 791 1644 780 1643 780 1643 786 1642 786 1642 787 1641 787 1641 788 1640 788 1640 789 1639 789 1639 788 1638 788 1638 799 1637 799 1637 804 1635 804 1635 812 1634 812 1634 819 1633 819 1633 824 1632 824 1632 818 1631 818 1631 814 1630 814 1630 875 1625 875 1625 834 1624 834 1624 860 1623 860 1623 875 1620 875 1620 832 1619 832 1619 875 1617 875 1617 824 1616 824 1616 831 1615 831 1615 828 1614 828 1614 837 1613 837 1613 875 1386 875 1386 822 1385 822 1385 875 1341 875 1341 848 1340 848 1340 875 1221 875 1221 832 1220 832 1220 875 1206 875 1206 861 1205 861 1205 875 928 875 928 826 927 826 927 875 898 875 898 823 897 823 897 875 605 875 605 857 604 857 604 875 409 875 409 847 408 847 408 875 372 875 372 839 371 839 371 875 342 875 342 869 341 869 341 875 312 875 312 845 311 845 311 875 302 875 302 844 301 844 301 875 300 875 300 810 299 810 299 803 298 803 298 838 297 838 297 841 296 841 296 819 295 819 295 817 294 817 294 850 293 850 293 825 292 825 292 837 291 837 291 841 290 841 290 810 289 810 289 821 288 821 288 794 287 794 287 798 286 798 286 850 285 850 285 814 284 814 284 850 283 850 283 853 282 853 282 825 281 825 281 853 280 853 280 814 279 814 279 864 278 864 278 825 277 825 277 844 276 844 276 858 275 858 275 815 274 815 274 845 273 845 273 822 272 822 272 861 271 861 271 860 270 860 270 805 269 805 269 785 268 785 268 839 267 839 267 806 266 806 266 867 265 867 265 832 264 832 264 825 263 825 263 847 262 847 262 848 261 848 261 860 260 860 260 824 259 824 259 858 258 858 258 833 257 833 257 851 256 851 256 823 255 823 255 838 254 838 254 864 253 864 253 860 252 860 252 856 251 856 251 862 250 862 250 864 249 864 249 825 248 825 248 805 247 805 247 838 246 838 246 850 245 850 245 855 244 855 244 837 243 837 243 791 242 791 242 833 241 833 241 812 240 812 240 818 239 818 239 798 238 798 238 785 237 785 237 856 235 856 235 829 234 829 234 827 233 827 233 813 232 813 232 829 231 829 231 824 230 824 230 818 229 818 229 822 228 822 228 845 227 845 227 829 226 829 226 791 225 791 225 810 224 810 224 835 223 835 223 814 222 814 222 757 221 757 221 786 220 786 220 800 219 800 219 806 218 806 218 759 217 759 217 785 216 785 216 807 215 807 215 787 214 787 214 802 213 802 213 798 212 798 212 803 211 803 211 800 210 800 210 799 209 799 209 761 208 761 208 704 206 704Z" fill="#4450c8"/><path d="M206 704 208 704 208 675 209 675 209 672 210 672 210 669 211 669 211 670 212 670 212 669 213 669 213 670 214 670 214 680 215 680 215 672 216 672 216 669 217 669 217 667 218 667 218 670 219 670 219 671 220 671 220 680 221 680 221 668 222 668 222 660 223 660 223 664 224 664 224 665 225 665 225 662 226 662 226 660 227 660 227 657 228 657 228 659 229 659 229 660 230 660 230 659 231 659 231 662 232 662 232 656 233 656 233 658 234 658 234 659 235 659 235 674 236 674 236 662 237 662 237 663 238 663 238 664 239 664 239 667 240 667 240 678 241 678 241 667 242 667 242 673 243 673 243 658 244 658 244 669 245 669 245 661 246 661 246 666 247 666 247 669 248 669 248 662 251 662 251 659 252 659 252 666 253 666 253 652 254 652 254 658 255 658 255 657 257 657 257 656 258 656 258 648 259 648 259 660 260 660 260 661 261 661 261 658 262 658 262 663 263 663 263 672 264 672 264 660 265 660 265 658 266 658 266 652 267 652 267 671 268 671 268 660 269 660 269 658 270 658 270 665 271 665 271 663 272 663 272 664 273 664 273 661 274 661 274 673 275 673 275 661 276 661 276 662 277 662 277 665 278 665 278 661 279 661 279 662 281 662 281 663 283 663 283 655 284 655 284 670 285 670 285 666 286 666 286 673 287 673 287 654 288 654 288 660 289 660 289 662 291 662 291 661 292 661 292 664 293 664 293 666 295 666 295 669 296 669 296 672 297 672 297 663 298 663 298 662 300 662 300 642 301 642 301 635 302 635 302 634 303 634 303 631 304 631 304 639 305 639 305 642 306 642 306 651 307 651 307 641 308 641 308 644 309 644 309 649 310 649 310 638 311 638 311 651 312 651 312 639 313 639 313 636 314 636 314 644 315 644 315 646 316 646 316 644 317 644 317 636 318 636 318 639 319 639 319 651 320 651 320 643 321 643 321 642 322 642 322 645 324 645 324 649 325 649 325 647 327 647 327 651 328 651 328 644 329 644 329 643 331 643 331 644 332 644 332 652 333 652 333 643 334 643 334 633 335 633 335 624 336 624 336 640 337 640 337 634 338 634 338 643 339 643 339 650 340 650 340 644 341 644 341 648 342 648 342 637 343 637 343 647 344 647 344 644 345 644 345 641 346 641 346 649 347 649 347 647 348 647 348 642 349 642 349 637 350 637 350 638 351 638 351 631 353 631 353 623 354 623 354 634 355 634 355 633 356 633 356 640 357 640 357 641 358 641 358 646 359 646 359 635 361 635 361 632 362 632 362 634 363 634 363 632 364 632 364 644 365 644 365 637 366 637 366 646 367 646 367 640 368 640 368 632 369 632 369 659 370 659 370 636 372 636 372 637 373 637 373 629 374 629 374 634 376 634 376 640 377 640 377 634 378 634 378 639 379 639 379 652 380 652 380 646 381 646 381 643 382 643 382 638 383 638 383 636 384 636 384 640 385 640 385 641 387 641 387 653 388 653 388 644 389 644 389 649 390 649 390 644 391 644 391 633 392 633 392 629 393 629 393 636 394 636 394 635 395 635 395 636 396 636 396 637 397 637 397 641 398 641 398 644 399 644 399 642 400 642 400 637 401 637 401 632 402 632 402 640 403 640 403 643 404 643 404 645 405 645 405 647 406 647 406 645 407 645 407 641 408 641 408 653 409 653 409 641 410 641 410 638 411 638 411 630 412 630 412 631 413 631 413 625 414 625 414 633 415 633 415 645 416 645 416 642 417 642 417 641 418 641 418 635 419 635 419 650 420 650 420 636 421 636 421 631 422 631 422 638 423 638 423 630 424 630 424 645 425 645 425 637 427 637 427 643 428 643 428 639 429 639 429 643 430 643 430 652 431 652 431 648 432 648 432 640 433 640 433 638 434 638 434 631 435 631 435 647 436 647 436 637 437 637 437 643 438 643 438 646 439 646 439 644 440 644 440 640 441 640 441 641 442 641 442 635 443 635 443 638 444 638 444 641 445 641 445 632 446 632 446 631 447 631 447 624 448 624 448 647 449 647 449 634 450 634 450 633 451 633 451 632 452 632 452 627 453 627 453 632 454 632 454 634 455 634 455 626 456 626 456 635 457 635 457 644 458 644 458 649 459 649 459 638 460 638 460 639 461 639 461 633 463 633 463 651 464 651 464 631 465 631 465 644 466 644 466 636 467 636 467 632 468 632 468 638 469 638 469 639 470 639 470 637 471 637 471 639 472 639 472 631 473 631 473 651 474 651 474 639 475 639 475 624 476 624 476 619 477 619 477 639 478 639 478 636 479 636 479 635 481 635 481 637 482 637 482 636 484 636 484 639 485 639 485 637 486 637 486 633 487 633 487 631 488 631 488 628 489 628 489 634 490 634 490 617 491 617 491 636 493 636 493 638 494 638 494 636 495 636 495 632 496 632 496 634 497 634 497 633 498 633 498 647 499 647 499 639 500 639 500 631 501 631 501 636 502 636 502 644 503 644 503 643 504 643 504 652 505 652 505 637 506 637 506 636 507 636 507 637 508 637 508 635 509 635 509 632 511 632 511 630 512 630 512 635 513 635 513 630 514 630 514 637 515 637 515 629 516 629 516 628 517 628 517 641 518 641 518 639 519 639 519 649 520 649 520 628 521 628 521 634 522 634 522 637 523 637 523 640 525 640 525 635 526 635 526 639 527 639 527 644 528 644 528 635 529 635 529 640 530 640 530 645 531 645 531 642 532 642 532 639 533 639 533 633 534 633 534 632 535 632 535 625 536 625 536 645 537 645 537 641 539 641 539 645 540 645 540 648 541 648 541 640 542 640 542 635 543 635 543 632 544 632 544 630 545 630 545 634 546 634 546 637 547 637 547 636 548 636 548 639 549 639 549 645 550 645 550 636 551 636 551 638 552 638 552 630 553 630 553 638 554 638 554 630 555 630 555 639 556 639 556 635 557 635 557 645 558 645 558 639 559 639 559 634 560 634 560 644 561 644 561 649 562 649 562 641 563 641 563 627 564 627 564 641 565 641 565 631 566 631 566 621 568 621 568 622 569 622 569 620 570 620 570 626 571 626 571 628 572 628 572 652 573 652 573 645 574 645 574 630 575 630 575 642 576 642 576 635 577 635 577 636 578 636 578 630 579 630 579 631 580 631 580 629 581 629 581 628 582 628 582 626 583 626 583 630 584 630 584 634 585 634 585 628 586 628 586 630 587 630 587 629 589 629 589 633 590 633 590 637 591 637 591 638 592 638 592 625 593 625 593 642 594 642 594 639 595 639 595 641 596 641 596 637 597 637 597 635 598 635 598 649 599 649 599 640 600 640 600 627 601 627 601 626 602 626 602 629 603 629 603 632 604 632 604 635 605 635 605 621 606 621 606 630 607 630 607 629 608 629 608 628 609 628 609 629 611 629 611 632 612 632 612 629 613 629 613 633 614 633 614 625 615 625 615 627 617 627 617 630 618 630 618 629 619 629 619 627 620 627 620 631 621 631 621 627 622 627 622 629 623 629 623 627 625 627 625 636 626 636 626 633 627 633 627 632 628 632 628 631 630 631 630 627 631 627 631 641 632 641 632 635 633 635 633 634 634 634 634 635 635 635 635 627 636 627 636 636 637 636 637 639 638 639 638 644 639 644 639 639 640 639 640 644 641 644 641 640 642 640 642 636 643 636 643 649 644 649 644 639 645 639 645 628 646 628 646 629 647 629 647 637 649 637 649 631 650 631 650 634 651 634 651 623 652 623 652 626 653 626 653 624 654 624 654 625 655 625 655 627 656 627 656 628 657 628 657 636 658 636 658 641 659 641 659 639 660 639 660 638 661 638 661 635 662 635 662 633 663 633 663 636 664 636 664 640 665 640 665 643 666 643 666 639 667 639 667 643 668 643 668 642 669 642 669 652 670 652 670 645 671 645 671 649 672 649 672 640 673 640 673 642 674 642 674 641 675 641 675 633 676 633 676 630 677 630 677 636 678 636 678 629 679 629 679 633 680 633 680 630 681 630 681 640 682 640 682 630 683 630 683 629 684 629 684 632 685 632 685 634 686 634 686 640 687 640 687 637 689 637 689 631 690 631 690 634 691 634 691 630 692 630 692 631 693 631 693 634 695 634 695 635 696 635 696 638 697 638 697 639 698 639 698 641 699 641 699 637 701 637 701 643 702 643 702 645 703 645 703 644 704 644 704 656 705 656 705 651 706 651 706 634 707 634 707 628 708 628 708 629 709 629 709 634 710 634 710 630 711 630 711 646 712 646 712 630 713 630 713 629 714 629 714 631 715 631 715 632 716 632 716 629 718 629 718 636 719 636 719 631 720 631 720 624 721 624 721 626 722 626 722 627 723 627 723 630 724 630 724 637 725 637 725 629 726 629 726 631 727 631 727 634 728 634 728 638 729 638 729 632 730 632 730 640 731 640 731 633 732 633 732 636 733 636 733 655 734 655 734 641 735 641 735 631 736 631 736 630 737 630 737 633 738 633 738 648 739 648 739 629 740 629 740 630 742 630 742 635 743 635 743 638 744 638 744 636 745 636 745 630 746 630 746 627 747 627 747 629 749 629 749 626 750 626 750 635 751 635 751 630 752 630 752 622 753 622 753 630 754 630 754 629 755 629 755 633 756 633 756 634 757 634 757 632 758 632 758 629 759 629 759 626 760 626 760 627 761 627 761 629 762 629 762 643 763 643 763 627 764 627 764 630 765 630 765 632 766 632 766 637 767 637 767 640 768 640 768 637 769 637 769 651 770 651 770 634 772 634 772 629 773 629 773 637 774 637 774 635 775 635 775 630 776 630 776 631 778 631 778 638 779 638 779 639 780 639 780 633 781 633 781 632 782 632 782 631 783 631 783 650 784 650 784 633 785 633 785 632 786 632 786 638 787 638 787 651 788 651 788 634 789 634 789 637 790 637 790 640 792 640 792 649 793 649 793 629 794 629 794 628 795 628 795 621 796 621 796 630 797 630 797 633 798 633 798 647 799 647 799 632 800 632 800 634 802 634 802 652 803 652 803 638 804 638 804 635 806 635 806 636 807 636 807 634 808 634 808 632 809 632 809 636 810 636 810 639 811 639 811 633 812 633 812 634 813 634 813 643 814 643 814 636 815 636 815 637 816 637 816 634 817 634 817 632 818 632 818 636 819 636 819 644 820 644 820 636 821 636 821 637 822 637 822 624 823 624 823 630 824 630 824 632 825 632 825 624 826 624 826 625 827 625 827 633 828 633 828 625 829 625 829 641 830 641 830 626 831 626 831 624 832 624 832 619 833 619 833 626 834 626 834 628 835 628 835 633 836 633 836 626 837 626 837 627 838 627 838 626 839 626 839 627 841 627 841 630 842 630 842 634 843 634 843 640 844 640 844 639 845 639 845 638 846 638 846 639 847 639 847 632 848 632 848 627 849 627 849 645 850 645 850 629 851 629 851 632 852 632 852 633 853 633 853 638 854 638 854 630 855 630 855 632 856 632 856 634 857 634 857 641 859 641 859 650 860 650 860 637 861 637 861 636 862 636 862 637 863 637 863 641 864 641 864 633 865 633 865 634 866 634 866 635 867 635 867 631 868 631 868 628 869 628 869 629 871 629 871 630 872 630 872 628 873 628 873 634 874 634 874 637 875 637 875 634 876 634 876 635 877 635 877 638 878 638 878 633 879 633 879 642 880 642 880 633 881 633 881 638 882 638 882 647 883 647 883 650 884 650 884 641 885 641 885 640 886 640 886 651 887 651 887 640 888 640 888 632 889 632 889 626 890 626 890 630 891 630 891 634 892 634 892 635 893 635 893 636 894 636 894 646 895 646 895 632 897 632 897 650 898 650 898 648 899 648 899 643 901 643 901 641 902 641 902 649 903 649 903 648 904 648 904 644 905 644 905 643 906 643 906 653 907 653 907 643 908 643 908 651 909 651 909 649 910 649 910 643 911 643 911 639 912 639 912 641 913 641 913 651 914 651 914 658 915 658 915 645 916 645 916 640 917 640 917 636 918 636 918 647 919 647 919 654 920 654 920 656 921 656 921 653 922 653 922 644 923 644 923 651 924 651 924 646 925 646 925 650 926 650 926 649 927 649 927 666 928 666 928 654 929 654 929 656 930 656 930 661 931 661 931 648 932 648 932 656 933 656 933 646 934 646 934 639 935 639 935 638 936 638 936 647 937 647 937 643 938 643 938 642 939 642 939 647 940 647 940 643 941 643 941 642 942 642 942 652 943 652 943 642 944 642 944 637 945 637 945 649 946 649 946 648 947 648 947 649 948 649 948 653 950 653 950 665 951 665 951 641 952 641 952 637 953 637 953 634 954 634 954 642 955 642 955 630 956 630 956 626 957 626 957 630 959 630 959 629 960 629 960 625 961 625 961 633 962 633 962 629 963 629 963 628 964 628 964 630 965 630 965 631 966 631 966 636 967 636 967 639 968 639 968 635 969 635 969 643 971 643 971 633 972 633 972 638 973 638 973 633 975 633 975 630 976 630 976 638 977 638 977 642 978 642 978 641 980 641 980 640 981 640 981 636 982 636 982 635 984 635 984 629 985 629 985 623 986 623 986 626 987 626 987 628 988 628 988 636 989 636 989 622 991 622 991 628 992 628 992 634 993 634 993 628 994 628 994 631 995 631 995 635 996 635 996 631 997 631 997 638 998 638 998 637 999 637 999 636 1000 636 1000 626 1001 626 1001 629 1002 629 1002 632 1003 632 1003 630 1004 630 1004 628 1005 628 1005 627 1006 627 1006 635 1007 635 1007 631 1008 631 1008 632 1009 632 1009 630 1010 630 1010 631 1011 631 1011 632 1012 632 1012 635 1013 635 1013 634 1014 634 1014 631 1016 631 1016 634 1017 634 1017 633 1018 633 1018 629 1019 629 1019 644 1020 644 1020 631 1021 631 1021 635 1022 635 1022 628 1023 628 1023 626 1024 626 1024 630 1025 630 1025 624 1026 624 1026 628 1027 628 1027 632 1028 632 1028 628 1029 628 1029 631 1030 631 1030 633 1031 633 1031 634 1032 634 1032 623 1033 623 1033 630 1034 630 1034 633 1035 633 1035 626 1036 626 1036 635 1037 635 1037 636 1038 636 1038 627 1039 627 1039 629 1040 629 1040 628 1041 628 1041 633 1042 633 1042 634 1043 634 1043 628 1044 628 1044 633 1045 633 1045 634 1047 634 1047 641 1048 641 1048 634 1049 634 1049 629 1050 629 1050 617 1051 617 1051 624 1052 624 1052 625 1053 625 1053 627 1054 627 1054 626 1055 626 1055 630 1056 630 1056 650 1057 650 1057 633 1058 633 1058 645 1059 645 1059 638 1060 638 1060 641 1061 641 1061 634 1062 634 1062 647 1063 647 1063 632 1065 632 1065 635 1066 635 1066 637 1067 637 1067 634 1068 634 1068 637 1069 637 1069 635 1070 635 1070 645 1071 645 1071 639 1072 639 1072 634 1073 634 1073 644 1074 644 1074 643 1075 643 1075 635 1076 635 1076 632 1077 632 1077 642 1078 642 1078 632 1079 632 1079 639 1080 639 1080 638 1081 638 1081 637 1082 637 1082 636 1083 636 1083 640 1084 640 1084 641 1085 641 1085 636 1086 636 1086 641 1087 641 1087 630 1088 630 1088 636 1089 636 1089 630 1090 630 1090 620 1091 620 1091 631 1092 631 1092 634 1093 634 1093 629 1094 629 1094 636 1095 636 1095 642 1096 642 1096 645 1097 645 1097 642 1098 642 1098 643 1099 643 1099 638 1100 638 1100 645 1101 645 1101 634 1102 634 1102 640 1103 640 1103 637 1104 637 1104 635 1105 635 1105 636 1106 636 1106 633 1107 633 1107 630 1108 630 1108 643 1109 643 1109 632 1110 632 1110 635 1111 635 1111 647 1112 647 1112 638 1114 638 1114 623 1115 623 1115 630 1116 630 1116 644 1117 644 1117 629 1119 629 1119 637 1120 637 1120 638 1121 638 1121 637 1122 637 1122 633 1123 633 1123 632 1124 632 1124 637 1125 637 1125 636 1126 636 1126 637 1127 637 1127 640 1128 640 1128 633 1129 633 1129 635 1130 635 1130 633 1131 633 1131 623 1132 623 1132 630 1133 630 1133 629 1134 629 1134 635 1135 635 1135 630 1136 630 1136 632 1137 632 1137 624 1138 624 1138 627 1139 627 1139 626 1141 626 1141 623 1142 623 1142 624 1143 624 1143 615 1144 615 1144 622 1145 622 1145 618 1146 618 1146 621 1147 621 1147 620 1148 620 1148 630 1149 630 1149 633 1150 633 1150 631 1151 631 1151 639 1152 639 1152 633 1153 633 1153 642 1154 642 1154 632 1155 632 1155 627 1156 627 1156 624 1157 624 1157 629 1158 629 1158 634 1159 634 1159 630 1160 630 1160 627 1161 627 1161 643 1162 643 1162 637 1163 637 1163 625 1164 625 1164 627 1165 627 1165 626 1166 626 1166 623 1167 623 1167 628 1168 628 1168 633 1169 633 1169 640 1170 640 1170 634 1171 634 1171 631 1172 631 1172 624 1173 624 1173 626 1175 626 1175 628 1176 628 1176 625 1177 625 1177 626 1178 626 1178 623 1179 623 1179 628 1180 628 1180 629 1181 629 1181 621 1182 621 1182 623 1183 623 1183 625 1185 625 1185 624 1186 624 1186 627 1188 627 1188 632 1189 632 1189 633 1190 633 1190 642 1191 642 1191 644 1192 644 1192 643 1193 643 1193 655 1194 655 1194 632 1195 632 1195 635 1196 635 1196 633 1197 633 1197 637 1198 637 1198 636 1199 636 1199 648 1200 648 1200 635 1201 635 1201 657 1202 657 1202 637 1203 637 1203 654 1204 654 1204 641 1205 641 1205 632 1206 632 1206 628 1207 628 1207 647 1208 647 1208 627 1209 627 1209 631 1210 631 1210 632 1212 632 1212 638 1213 638 1213 632 1214 632 1214 630 1215 630 1215 633 1216 633 1216 647 1217 647 1217 635 1218 635 1218 628 1219 628 1219 655 1220 655 1220 649 1221 649 1221 627 1222 627 1222 636 1223 636 1223 633 1224 633 1224 652 1225 652 1225 646 1226 646 1226 631 1227 631 1227 637 1228 637 1228 632 1229 632 1229 635 1230 635 1230 637 1231 637 1231 646 1232 646 1232 651 1233 651 1233 642 1234 642 1234 635 1235 635 1235 648 1236 648 1236 628 1237 628 1237 631 1238 631 1238 639 1239 639 1239 652 1240 652 1240 633 1241 633 1241 620 1242 620 1242 646 1243 646 1243 640 1244 640 1244 645 1245 645 1245 636 1247 636 1247 635 1248 635 1248 639 1249 639 1249 633 1250 633 1250 634 1251 634 1251 639 1252 639 1252 633 1253 633 1253 636 1254 636 1254 632 1255 632 1255 631 1256 631 1256 632 1257 632 1257 641 1258 641 1258 631 1259 631 1259 632 1260 632 1260 628 1261 628 1261 626 1262 626 1262 641 1263 641 1263 637 1264 637 1264 639 1265 639 1265 635 1266 635 1266 636 1267 636 1267 634 1268 634 1268 632 1269 632 1269 631 1271 631 1271 637 1272 637 1272 631 1273 631 1273 630 1274 630 1274 633 1275 633 1275 634 1276 634 1276 627 1277 627 1277 634 1278 634 1278 648 1279 648 1279 647 1280 647 1280 632 1281 632 1281 628 1282 628 1282 629 1283 629 1283 628 1284 628 1284 623 1285 623 1285 635 1286 635 1286 631 1287 631 1287 628 1288 628 1288 631 1289 631 1289 627 1290 627 1290 629 1291 629 1291 639 1292 639 1292 634 1293 634 1293 633 1294 633 1294 636 1295 636 1295 652 1296 652 1296 631 1297 631 1297 630 1298 630 1298 636 1299 636 1299 625 1300 625 1300 636 1301 636 1301 656 1302 656 1302 647 1303 647 1303 643 1304 643 1304 651 1305 651 1305 637 1306 637 1306 630 1307 630 1307 643 1308 643 1308 630 1309 630 1309 636 1310 636 1310 621 1311 621 1311 613 1312 613 1312 620 1313 620 1313 622 1314 622 1314 624 1315 624 1315 626 1316 626 1316 636 1317 636 1317 648 1318 648 1318 643 1319 643 1319 651 1320 651 1320 638 1321 638 1321 641 1322 641 1322 634 1323 634 1323 627 1324 627 1324 637 1325 637 1325 635 1326 635 1326 639 1327 639 1327 640 1328 640 1328 632 1329 632 1329 637 1331 637 1331 636 1332 636 1332 642 1333 642 1333 630 1334 630 1334 621 1335 621 1335 624 1336 624 1336 631 1337 631 1337 633 1338 633 1338 635 1339 635 1339 636 1340 636 1340 637 1341 637 1341 631 1342 631 1342 635 1343 635 1343 623 1344 623 1344 633 1345 633 1345 635 1346 635 1346 634 1348 634 1348 637 1350 637 1350 635 1351 635 1351 640 1352 640 1352 653 1353 653 1353 635 1354 635 1354 638 1355 638 1355 636 1357 636 1357 637 1358 637 1358 640 1359 640 1359 633 1360 633 1360 625 1361 625 1361 632 1362 632 1362 633 1363 633 1363 627 1364 627 1364 639 1365 639 1365 638 1366 638 1366 639 1367 639 1367 634 1369 634 1369 636 1370 636 1370 633 1371 633 1371 628 1372 628 1372 633 1373 633 1373 634 1374 634 1374 640 1375 640 1375 636 1376 636 1376 634 1377 634 1377 635 1378 635 1378 629 1379 629 1379 634 1381 634 1381 636 1382 636 1382 639 1383 639 1383 638 1384 638 1384 641 1385 641 1385 655 1386 655 1386 636 1387 636 1387 641 1389 641 1389 630 1390 630 1390 654 1391 654 1391 639 1392 639 1392 640 1393 640 1393 658 1394 658 1394 636 1395 636 1395 632 1396 632 1396 633 1397 633 1397 636 1398 636 1398 635 1400 635 1400 636 1401 636 1401 646 1402 646 1402 659 1403 659 1403 645 1404 645 1404 637 1405 637 1405 634 1406 634 1406 631 1407 631 1407 628 1408 628 1408 623 1409 623 1409 632 1410 632 1410 631 1411 631 1411 635 1412 635 1412 636 1413 636 1413 627 1414 627 1414 633 1415 633 1415 630 1416 630 1416 640 1418 640 1418 642 1419 642 1419 640 1420 640 1420 635 1421 635 1421 644 1422 644 1422 645 1423 645 1423 637 1424 637 1424 634 1425 634 1425 641 1426 641 1426 640 1427 640 1427 630 1429 630 1429 636 1430 636 1430 638 1431 638 1431 647 1432 647 1432 634 1433 634 1433 628 1434 628 1434 634 1435 634 1435 637 1436 637 1436 635 1437 635 1437 634 1438 634 1438 636 1439 636 1439 634 1440 634 1440 632 1441 632 1441 626 1442 626 1442 630 1443 630 1443 635 1444 635 1444 625 1445 625 1445 631 1446 631 1446 638 1447 638 1447 633 1448 633 1448 628 1449 628 1449 651 1450 651 1450 641 1451 641 1451 639 1452 639 1452 648 1453 648 1453 642 1454 642 1454 639 1455 639 1455 643 1456 643 1456 655 1457 655 1457 625 1458 625 1458 628 1459 628 1459 634 1460 634 1460 627 1461 627 1461 631 1462 631 1462 630 1463 630 1463 633 1464 633 1464 647 1465 647 1465 631 1466 631 1466 646 1467 646 1467 633 1468 633 1468 637 1469 637 1469 644 1471 644 1471 640 1472 640 1472 654 1473 654 1473 636 1474 636 1474 642 1475 642 1475 631 1476 631 1476 634 1477 634 1477 640 1478 640 1478 634 1479 634 1479 645 1480 645 1480 650 1481 650 1481 644 1482 644 1482 634 1483 634 1483 649 1484 649 1484 636 1485 636 1485 637 1486 637 1486 634 1487 634 1487 654 1488 654 1488 642 1489 642 1489 629 1490 629 1490 631 1492 631 1492 628 1493 628 1493 629 1494 629 1494 639 1495 639 1495 643 1496 643 1496 636 1497 636 1497 630 1498 630 1498 633 1499 633 1499 637 1500 637 1500 639 1501 639 1501 635 1502 635 1502 632 1503 632 1503 631 1504 631 1504 627 1505 627 1505 630 1506 630 1506 633 1507 633 1507 634 1508 634 1508 628 1509 628 1509 632 1510 632 1510 629 1511 629 1511 634 1512 634 1512 632 1513 632 1513 648 1514 648 1514 636 1515 636 1515 639 1516 639 1516 642 1517 642 1517 637 1518 637 1518 630 1519 630 1519 628 1520 628 1520 635 1521 635 1521 636 1522 636 1522 631 1524 631 1524 633 1525 633 1525 630 1526 630 1526 623 1527 623 1527 629 1528 629 1528 640 1529 640 1529 633 1531 633 1531 631 1532 631 1532 642 1533 642 1533 636 1534 636 1534 649 1535 649 1535 640 1536 640 1536 636 1537 636 1537 633 1538 633 1538 637 1539 637 1539 634 1540 634 1540 637 1541 637 1541 632 1542 632 1542 629 1543 629 1543 630 1544 630 1544 628 1545 628 1545 636 1546 636 1546 637 1547 637 1547 648 1548 648 1548 633 1549 633 1549 632 1550 632 1550 645 1551 645 1551 634 1552 634 1552 631 1553 631 1553 629 1554 629 1554 627 1555 627 1555 633 1556 633 1556 630 1557 630 1557 637 1558 637 1558 629 1560 629 1560 642 1561 642 1561 637 1562 637 1562 638 1563 638 1563 636 1564 636 1564 630 1565 630 1565 628 1566 628 1566 629 1567 629 1567 621 1568 621 1568 631 1569 631 1569 636 1570 636 1570 629 1571 629 1571 624 1572 624 1572 633 1573 633 1573 634 1574 634 1574 646 1575 646 1575 638 1576 638 1576 635 1577 635 1577 636 1578 636 1578 638 1579 638 1579 652 1580 652 1580 637 1581 637 1581 630 1582 630 1582 626 1583 626 1583 624 1584 624 1584 625 1585 625 1585 626 1586 626 1586 630 1587 630 1587 624 1588 624 1588 623 1589 623 1589 628 1590 628 1590 630 1591 630 1591 634 1592 634 1592 632 1593 632 1593 647 1594 647 1594 623 1595 623 1595 631 1597 631 1597 628 1598 628 1598 644 1599 644 1599 631 1600 631 1600 633 1601 633 1601 636 1602 636 1602 638 1603 638 1603 642 1604 642 1604 639 1605 639 1605 633 1606 633 1606 632 1608 632 1608 630 1609 630 1609 634 1610 634 1610 632 1611 632 1611 628 1612 628 1612 631 1613 631 1613 652 1614 652 1614 651 1615 651 1615 653 1616 653 1616 655 1617 655 1617 647 1619 647 1619 650 1620 650 1620 649 1622 649 1622 652 1623 652 1623 653 1624 653 1624 655 1625 655 1625 654 1626 654 1626 655 1627 655 1627 656 1628 656 1628 654 1630 654 1630 665 1632 665 1632 666 1633 666 1633 668 1634 668 1634 673 1635 673 1635 671 1636 671 1636 672 1637 672 1637 669 1639 669 1639 672 1641 672 1641 674 1642 674 1642 676 1643 676 1643 677 1645 677 1645 678 1646 678 1646 675 1648 675 1648 676 1650 676 1650 677 1652 677 1652 680 1653 680 1653 679 1654 679 1654 681 1655 681 1655 678 1656 678 1656 681 1657 681 1657 678 1658 678 1658 683 1659 683 1659 682 1660 682 1660 680 1661 680 1661 682 1662 682 1662 680 1663 680 1663 684 1665 684 1665 683 1666 683 1666 686 1667 686 1667 685 1668 685 1668 686 1670 686 1670 687 1671 687 1671 686 1672 686 1672 685 1673 685 1673 684 1674 684 1674 687 1675 687 1675 685 1676 685 1676 686 1677 686 1677 688 1678 688 1678 690 1679 690 1679 694 1680 694 1680 696 1681 696 1681 699 1682 699 1682 701 1683 701 1683 702 1684 702 1684 704 1713 704 1713 704 1684 704 1684 706 1683 706 1683 707 1682 707 1682 709 1681 709 1681 712 1680 712 1680 714 1679 714 1679 718 1678 718 1678 720 1677 720 1677 722 1676 722 1676 720 1675 720 1675 723 1674 723 1674 720 1673 720 1673 723 1672 723 1672 724 1671 724 1671 722 1670 722 1670 721 1669 721 1669 726 1668 726 1668 722 1667 722 1667 725 1666 725 1666 724 1665 724 1665 727 1664 727 1664 726 1660 726 1660 729 1659 729 1659 728 1658 728 1658 726 1657 726 1657 730 1656 730 1656 727 1655 727 1655 730 1654 730 1654 727 1653 727 1653 729 1652 729 1652 728 1650 728 1650 731 1648 731 1648 729 1647 729 1647 732 1646 732 1646 730 1645 730 1645 732 1644 732 1644 734 1643 734 1643 732 1641 732 1641 731 1640 731 1640 739 1639 739 1639 738 1638 738 1638 739 1636 739 1636 735 1635 735 1635 738 1634 738 1634 741 1632 741 1632 742 1631 742 1631 743 1630 743 1630 755 1629 755 1629 754 1628 754 1628 755 1627 755 1627 754 1626 754 1626 757 1625 757 1625 756 1624 756 1624 755 1622 755 1622 757 1621 757 1621 756 1620 756 1620 758 1619 758 1619 756 1618 756 1618 759 1617 759 1617 754 1616 754 1616 756 1615 756 1615 754 1613 754 1613 780 1612 780 1612 776 1611 776 1611 792 1610 792 1610 793 1609 793 1609 788 1608 788 1608 789 1607 789 1607 784 1606 784 1606 781 1605 781 1605 790 1604 790 1604 778 1603 778 1603 784 1602 784 1602 782 1601 782 1601 783 1600 783 1600 780 1599 780 1599 786 1598 786 1598 785 1597 785 1597 776 1596 776 1596 773 1595 773 1595 764 1594 764 1594 775 1593 775 1593 772 1592 772 1592 779 1591 779 1591 780 1590 780 1590 789 1589 789 1589 776 1587 776 1587 774 1586 774 1586 780 1585 780 1585 777 1584 777 1584 782 1583 782 1583 783 1582 783 1582 776 1581 776 1581 788 1580 788 1580 780 1579 780 1579 792 1578 792 1578 774 1577 774 1577 771 1576 771 1576 770 1575 770 1575 775 1574 775 1574 773 1573 773 1573 776 1572 776 1572 771 1571 771 1571 768 1570 768 1570 758 1569 758 1569 770 1568 770 1568 758 1567 758 1567 767 1566 767 1566 775 1565 775 1565 774 1564 774 1564 757 1563 757 1563 774 1562 774 1562 770 1561 770 1561 771 1560 771 1560 774 1559 774 1559 779 1558 779 1558 772 1557 772 1557 776 1556 776 1556 783 1555 783 1555 777 1554 777 1554 771 1553 771 1553 770 1552 770 1552 771 1551 771 1551 775 1550 775 1550 781 1549 781 1549 777 1548 777 1548 770 1547 770 1547 776 1546 776 1546 775 1545 775 1545 773 1544 773 1544 776 1543 776 1543 783 1542 783 1542 790 1541 790 1541 780 1540 780 1540 769 1539 769 1539 774 1538 774 1538 777 1537 777 1537 776 1536 776 1536 773 1535 773 1535 770 1534 770 1534 772 1533 772 1533 769 1532 769 1532 765 1531 765 1531 769 1530 769 1530 772 1529 772 1529 771 1528 771 1528 776 1527 776 1527 783 1525 783 1525 773 1522 773 1522 781 1521 781 1521 780 1520 780 1520 787 1519 787 1519 777 1518 777 1518 778 1517 778 1517 775 1515 775 1515 774 1514 774 1514 771 1513 771 1513 768 1512 768 1512 769 1511 769 1511 770 1510 770 1510 769 1508 769 1508 781 1507 781 1507 778 1506 778 1506 781 1505 781 1505 775 1502 775 1502 772 1501 772 1501 764 1500 764 1500 763 1499 763 1499 772 1498 772 1498 765 1497 765 1497 783 1496 783 1496 775 1495 775 1495 773 1492 773 1492 774 1491 774 1491 770 1490 770 1490 771 1489 771 1489 767 1488 767 1488 766 1487 766 1487 769 1486 769 1486 772 1485 772 1485 767 1484 767 1484 773 1483 773 1483 781 1482 781 1482 782 1481 782 1481 786 1480 786 1480 774 1479 774 1479 785 1478 785 1478 781 1477 781 1477 778 1476 778 1476 776 1475 776 1475 770 1474 770 1474 777 1473 777 1473 781 1472 781 1472 773 1471 773 1471 782 1470 782 1470 777 1468 777 1468 765 1467 765 1467 776 1466 776 1466 771 1465 771 1465 766 1464 766 1464 775 1463 775 1463 772 1462 772 1462 778 1461 778 1461 768 1460 768 1460 776 1459 776 1459 773 1458 773 1458 780 1457 780 1457 779 1456 779 1456 773 1455 773 1455 774 1454 774 1454 785 1453 785 1453 767 1452 767 1452 761 1451 761 1451 777 1450 777 1450 776 1449 776 1449 777 1447 777 1447 788 1446 788 1446 781 1445 781 1445 773 1444 773 1444 772 1443 772 1443 768 1442 768 1442 771 1441 771 1441 768 1440 768 1440 773 1439 773 1439 783 1438 783 1438 774 1437 774 1437 768 1435 768 1435 762 1434 762 1434 765 1432 765 1432 770 1431 770 1431 772 1430 772 1430 761 1429 761 1429 762 1428 762 1428 777 1426 777 1426 775 1425 775 1425 780 1424 780 1424 777 1423 777 1423 774 1422 774 1422 772 1420 772 1420 771 1419 771 1419 769 1418 769 1418 773 1417 773 1417 757 1416 757 1416 766 1415 766 1415 765 1414 765 1414 773 1412 773 1412 767 1411 767 1411 763 1410 763 1410 772 1409 772 1409 774 1408 774 1408 763 1407 763 1407 778 1406 778 1406 784 1405 784 1405 778 1404 778 1404 772 1403 772 1403 779 1402 779 1402 771 1401 771 1401 769 1400 769 1400 768 1398 768 1398 770 1397 770 1397 776 1395 776 1395 778 1394 778 1394 779 1392 779 1392 775 1390 775 1390 776 1389 776 1389 775 1388 775 1388 778 1387 778 1387 780 1386 780 1386 762 1385 762 1385 753 1384 753 1384 758 1383 758 1383 749 1382 749 1382 766 1381 766 1381 771 1380 771 1380 767 1379 767 1379 769 1378 769 1378 779 1377 779 1377 773 1376 773 1376 777 1375 777 1375 763 1374 763 1374 772 1373 772 1373 778 1372 778 1372 780 1371 780 1371 775 1370 775 1370 772 1369 772 1369 771 1368 771 1368 780 1367 780 1367 783 1366 783 1366 776 1365 776 1365 780 1364 780 1364 775 1362 775 1362 769 1361 769 1361 774 1360 774 1360 775 1359 775 1359 774 1358 774 1358 777 1357 777 1357 782 1356 782 1356 780 1355 780 1355 783 1354 783 1354 780 1353 780 1353 781 1352 781 1352 772 1351 772 1351 759 1350 759 1350 776 1349 776 1349 777 1347 777 1347 790 1346 790 1346 784 1345 784 1345 786 1344 786 1344 764 1343 764 1343 780 1342 780 1342 777 1341 777 1341 760 1340 760 1340 779 1339 779 1339 775 1338 775 1338 772 1337 772 1337 774 1336 774 1336 773 1335 773 1335 769 1334 769 1334 775 1333 775 1333 768 1332 768 1332 775 1331 775 1331 774 1330 774 1330 773 1329 773 1329 776 1328 776 1328 775 1327 775 1327 762 1326 762 1326 771 1325 771 1325 782 1324 782 1324 777 1323 777 1323 786 1322 786 1322 779 1321 779 1321 769 1320 769 1320 780 1317 780 1317 781 1316 781 1316 776 1315 776 1315 779 1314 779 1314 768 1313 768 1313 781 1312 781 1312 776 1311 776 1311 769 1310 769 1310 775 1309 775 1309 776 1308 776 1308 768 1307 768 1307 769 1306 769 1306 775 1305 775 1305 776 1304 776 1304 774 1303 774 1303 766 1302 766 1302 775 1301 775 1301 778 1300 778 1300 781 1299 781 1299 778 1298 778 1298 777 1297 777 1297 779 1296 779 1296 770 1295 770 1295 765 1294 765 1294 777 1293 777 1293 786 1292 786 1292 779 1291 779 1291 774 1289 774 1289 773 1288 773 1288 777 1287 777 1287 778 1286 778 1286 774 1285 774 1285 772 1284 772 1284 770 1283 770 1283 769 1282 769 1282 770 1281 770 1281 769 1280 769 1280 752 1279 752 1279 756 1278 756 1278 763 1277 763 1277 767 1276 767 1276 771 1275 771 1275 767 1274 767 1274 776 1273 776 1273 781 1272 781 1272 778 1271 778 1271 776 1270 776 1270 780 1268 780 1268 774 1267 774 1267 782 1266 782 1266 773 1265 773 1265 765 1264 765 1264 764 1263 764 1263 771 1262 771 1262 756 1261 756 1261 766 1260 766 1260 773 1259 773 1259 772 1257 772 1257 763 1256 763 1256 775 1255 775 1255 771 1254 771 1254 768 1253 768 1253 771 1252 771 1252 766 1251 766 1251 765 1250 765 1250 774 1249 774 1249 775 1248 775 1248 763 1247 763 1247 755 1246 755 1246 757 1245 757 1245 761 1244 761 1244 765 1243 765 1243 771 1242 771 1242 779 1241 779 1241 773 1240 773 1240 774 1239 774 1239 767 1238 767 1238 772 1237 772 1237 771 1236 771 1236 769 1235 769 1235 773 1234 773 1234 757 1233 757 1233 772 1232 772 1232 781 1231 781 1231 784 1229 784 1229 772 1228 772 1228 777 1227 777 1227 785 1226 785 1226 778 1225 778 1225 784 1224 784 1224 787 1223 787 1223 772 1222 772 1222 769 1221 769 1221 764 1220 764 1220 772 1219 772 1219 773 1218 773 1218 772 1216 772 1216 777 1215 777 1215 770 1214 770 1214 767 1213 767 1213 759 1212 759 1212 773 1211 773 1211 774 1210 774 1210 779 1208 779 1208 776 1207 776 1207 786 1206 786 1206 773 1205 773 1205 782 1204 782 1204 784 1203 784 1203 779 1202 779 1202 782 1201 782 1201 781 1200 781 1200 776 1199 776 1199 766 1198 766 1198 779 1197 779 1197 774 1196 774 1196 773 1194 773 1194 776 1193 776 1193 772 1192 772 1192 770 1191 770 1191 773 1190 773 1190 776 1189 776 1189 767 1188 767 1188 773 1187 773 1187 780 1186 780 1186 779 1185 779 1185 785 1184 785 1184 787 1182 787 1182 784 1181 784 1181 786 1180 786 1180 779 1179 779 1179 771 1178 771 1178 776 1177 776 1177 772 1176 772 1176 773 1175 773 1175 775 1174 775 1174 783 1173 783 1173 779 1172 779 1172 773 1171 773 1171 771 1170 771 1170 783 1169 783 1169 778 1168 778 1168 777 1167 777 1167 767 1166 767 1166 779 1164 779 1164 775 1163 775 1163 774 1162 774 1162 773 1161 773 1161 774 1160 774 1160 771 1159 771 1159 770 1158 770 1158 776 1157 776 1157 775 1156 775 1156 779 1154 779 1154 781 1153 781 1153 776 1152 776 1152 782 1151 782 1151 770 1150 770 1150 771 1149 771 1149 776 1148 776 1148 777 1147 777 1147 786 1146 786 1146 791 1145 791 1145 790 1144 790 1144 791 1143 791 1143 794 1142 794 1142 788 1141 788 1141 782 1140 782 1140 781 1139 781 1139 784 1138 784 1138 783 1137 783 1137 785 1136 785 1136 788 1135 788 1135 781 1134 781 1134 778 1133 778 1133 781 1132 781 1132 784 1131 784 1131 785 1130 785 1130 767 1129 767 1129 774 1127 774 1127 771 1126 771 1126 777 1125 777 1125 779 1124 779 1124 783 1123 783 1123 778 1122 778 1122 781 1121 781 1121 776 1120 776 1120 777 1119 777 1119 758 1118 758 1118 771 1117 771 1117 768 1116 768 1116 781 1115 781 1115 782 1113 782 1113 779 1112 779 1112 773 1111 773 1111 778 1110 778 1110 780 1109 780 1109 784 1108 784 1108 775 1106 775 1106 780 1105 780 1105 787 1104 787 1104 785 1103 785 1103 776 1102 776 1102 766 1101 766 1101 781 1100 781 1100 792 1099 792 1099 783 1098 783 1098 769 1097 769 1097 780 1096 780 1096 776 1095 776 1095 774 1094 774 1094 765 1093 765 1093 770 1092 770 1092 767 1091 767 1091 769 1090 769 1090 757 1089 757 1089 769 1088 769 1088 764 1087 764 1087 780 1086 780 1086 781 1085 781 1085 787 1084 787 1084 785 1083 785 1083 777 1082 777 1082 778 1081 778 1081 775 1080 775 1080 770 1079 770 1079 781 1078 781 1078 778 1077 778 1077 775 1076 775 1076 774 1075 774 1075 765 1074 765 1074 779 1073 779 1073 773 1072 773 1072 775 1071 775 1071 782 1070 782 1070 778 1069 778 1069 779 1068 779 1068 781 1067 781 1067 777 1066 777 1066 784 1065 784 1065 768 1064 768 1064 784 1063 784 1063 776 1062 776 1062 775 1060 775 1060 779 1059 779 1059 783 1058 783 1058 784 1057 784 1057 774 1056 774 1056 782 1055 782 1055 780 1053 780 1053 774 1052 774 1052 772 1051 772 1051 777 1050 777 1050 775 1049 775 1049 766 1048 766 1048 768 1047 768 1047 772 1046 772 1046 780 1045 780 1045 771 1044 771 1044 769 1042 769 1042 771 1041 771 1041 774 1040 774 1040 777 1039 777 1039 774 1038 774 1038 773 1037 773 1037 777 1035 777 1035 776 1034 776 1034 771 1033 771 1033 770 1032 770 1032 786 1031 786 1031 760 1030 760 1030 770 1029 770 1029 768 1028 768 1028 758 1027 758 1027 775 1025 775 1025 772 1024 772 1024 766 1023 766 1023 771 1022 771 1022 774 1021 774 1021 785 1020 785 1020 782 1019 782 1019 771 1018 771 1018 772 1017 772 1017 771 1016 771 1016 773 1015 773 1015 762 1014 762 1014 774 1013 774 1013 772 1012 772 1012 771 1011 771 1011 773 1010 773 1010 763 1009 763 1009 766 1008 766 1008 773 1007 773 1007 775 1006 775 1006 771 1005 771 1005 761 1004 761 1004 778 1003 778 1003 773 1002 773 1002 765 1001 765 1001 770 1000 770 1000 772 998 772 998 776 997 776 997 780 996 780 996 789 995 789 995 786 993 786 993 784 992 784 992 782 991 782 991 779 989 779 989 777 988 777 988 779 987 779 987 774 986 774 986 772 985 772 985 775 984 775 984 780 982 780 982 766 981 766 981 784 980 784 980 786 979 786 979 777 978 777 978 791 977 791 977 781 976 781 976 776 975 776 975 788 974 788 974 776 973 776 973 777 972 777 972 776 971 776 971 767 970 767 970 778 969 778 969 763 968 763 968 776 967 776 967 781 966 781 966 776 965 776 965 774 964 774 964 793 963 793 963 778 962 778 962 773 960 773 960 778 959 778 959 770 958 770 958 767 957 767 957 757 956 757 956 763 955 763 955 762 954 762 954 764 953 764 953 767 952 767 952 769 951 769 951 773 950 773 950 762 949 762 949 766 947 766 947 765 946 765 946 759 945 759 945 763 944 763 944 768 943 768 943 763 942 763 942 760 941 760 941 768 938 768 938 766 937 766 937 765 936 765 936 764 935 764 935 767 934 767 934 758 933 758 933 755 932 755 932 756 931 756 931 753 930 753 930 758 929 758 929 757 928 757 928 742 927 742 927 753 926 753 926 758 925 758 925 749 923 749 923 760 922 760 922 764 921 764 921 754 918 754 918 755 917 755 917 757 916 757 916 756 914 756 914 758 913 758 913 763 912 763 912 755 911 755 911 767 910 767 910 770 909 770 909 777 908 777 908 772 907 772 907 775 906 775 906 768 905 768 905 770 904 770 904 768 903 768 903 771 902 771 902 772 901 772 901 768 900 768 900 771 899 771 899 769 898 769 898 761 897 761 897 767 896 767 896 775 895 775 895 774 894 774 894 779 893 779 893 767 892 767 892 787 891 787 891 775 890 775 890 773 889 773 889 767 888 767 888 773 887 773 887 777 886 777 886 781 885 781 885 774 884 774 884 768 883 768 883 782 882 782 882 777 881 777 881 768 880 768 880 777 879 777 879 774 878 774 878 773 877 773 877 776 876 776 876 774 875 774 875 778 874 778 874 775 873 775 873 770 872 770 872 761 871 761 871 764 870 764 870 757 869 757 869 773 868 773 868 776 867 776 867 775 866 775 866 778 865 778 865 759 864 759 864 778 863 778 863 779 861 779 861 776 860 776 860 769 859 769 859 768 858 768 858 775 856 775 856 772 855 772 855 766 854 766 854 757 853 757 853 773 852 773 852 777 850 777 850 785 849 785 849 782 848 782 848 779 847 779 847 771 846 771 846 772 845 772 845 775 844 775 844 774 843 774 843 767 842 767 842 781 841 781 841 779 840 779 840 782 839 782 839 785 838 785 838 775 837 775 837 774 836 774 836 770 835 770 835 765 834 765 834 769 833 769 833 773 832 773 832 767 831 767 831 757 830 757 830 766 829 766 829 773 828 773 828 771 827 771 827 768 826 768 826 775 825 775 825 774 824 774 824 769 823 769 823 768 822 768 822 777 821 777 821 776 820 776 820 777 819 777 819 772 818 772 818 771 816 771 816 766 815 766 815 769 814 769 814 771 813 771 813 772 812 772 812 773 811 773 811 778 810 778 810 766 809 766 809 765 808 765 808 761 806 761 806 757 805 757 805 772 804 772 804 758 803 758 803 775 802 775 802 783 801 783 801 772 800 772 800 783 799 783 799 770 798 770 798 771 797 771 797 774 796 774 796 776 795 776 795 775 794 775 794 773 792 773 792 774 791 774 791 767 790 767 790 763 789 763 789 754 788 754 788 774 787 774 787 768 786 768 786 769 785 769 785 775 784 775 784 777 783 777 783 779 782 779 782 781 781 781 781 788 780 788 780 789 779 789 779 782 778 782 778 777 777 777 777 780 776 780 776 775 775 775 775 751 774 751 774 776 773 776 773 756 772 756 772 776 771 776 771 773 770 773 770 772 769 772 769 774 768 774 768 772 767 772 767 770 766 770 766 772 765 772 765 775 764 775 764 777 763 777 763 775 762 775 762 771 761 771 761 774 760 774 760 776 759 776 759 773 757 773 757 775 756 775 756 783 755 783 755 773 754 773 754 774 753 774 753 769 752 769 752 764 751 764 751 763 750 763 750 767 749 767 749 769 748 769 748 773 747 773 747 760 746 760 746 762 745 762 745 775 744 775 744 773 743 773 743 776 740 776 740 772 739 772 739 766 738 766 738 773 737 773 737 768 736 768 736 771 735 771 735 786 734 786 734 784 733 784 733 775 732 775 732 774 731 774 731 780 730 780 730 777 729 777 729 775 728 775 728 774 727 774 727 765 726 765 726 773 725 773 725 777 724 777 724 776 723 776 723 773 722 773 722 772 721 772 721 773 720 773 720 787 719 787 719 774 718 774 718 776 717 776 717 779 716 779 716 784 715 784 715 772 714 772 714 774 713 774 713 775 712 775 712 768 711 768 711 773 710 773 710 761 709 761 709 776 708 776 708 773 707 773 707 775 706 775 706 776 705 776 705 772 704 772 704 773 703 773 703 771 702 771 702 777 701 777 701 765 700 765 700 769 699 769 699 774 698 774 698 755 697 755 697 775 696 775 696 759 695 759 695 776 694 776 694 772 692 772 692 776 691 776 691 771 690 771 690 770 688 770 688 773 687 773 687 775 686 775 686 774 684 774 684 769 682 769 682 781 681 781 681 756 680 756 680 766 679 766 679 765 678 765 678 778 677 778 677 772 676 772 676 767 675 767 675 769 674 769 674 771 673 771 673 767 672 767 672 774 671 774 671 771 670 771 670 770 669 770 669 773 668 773 668 776 666 776 666 765 665 765 665 762 664 762 664 763 663 763 663 771 662 771 662 772 661 772 661 773 660 773 660 776 659 776 659 780 658 780 658 766 657 766 657 773 656 773 656 785 655 785 655 780 654 780 654 776 653 776 653 773 652 773 652 756 651 756 651 771 650 771 650 775 649 775 649 765 648 765 648 761 647 761 647 767 646 767 646 775 645 775 645 764 644 764 644 772 643 772 643 771 642 771 642 770 641 770 641 775 640 775 640 779 638 779 638 766 637 766 637 765 636 765 636 775 635 775 635 771 634 771 634 772 633 772 633 771 632 771 632 780 631 780 631 779 630 779 630 774 629 774 629 775 627 775 627 774 626 774 626 772 624 772 624 768 623 768 623 773 622 773 622 769 621 769 621 779 620 779 620 771 619 771 619 772 618 772 618 774 617 774 617 778 616 778 616 772 615 772 615 771 614 771 614 762 613 762 613 778 612 778 612 769 611 769 611 783 610 783 610 772 609 772 609 775 608 775 608 772 607 772 607 771 606 771 606 768 605 768 605 763 604 763 604 778 603 778 603 777 602 777 602 766 601 766 601 775 600 775 600 780 599 780 599 765 598 765 598 779 597 779 597 777 596 777 596 778 595 778 595 781 594 781 594 776 593 776 593 763 592 763 592 765 591 765 591 751 590 751 590 769 589 769 589 773 588 773 588 783 587 783 587 776 586 776 586 757 585 757 585 773 584 773 584 772 583 772 583 769 582 769 582 775 581 775 581 771 580 771 580 774 579 774 579 777 578 777 578 786 577 786 577 779 575 779 575 775 574 775 574 778 573 778 573 787 571 787 571 771 570 771 570 767 569 767 569 772 567 772 567 769 565 769 565 771 564 771 564 770 563 770 563 767 562 767 562 764 561 764 561 760 560 760 560 774 559 774 559 772 558 772 558 773 557 773 557 775 556 775 556 779 555 779 555 780 554 780 554 778 553 778 553 771 552 771 552 772 551 772 551 773 550 773 550 778 549 778 549 776 548 776 548 777 547 777 547 785 546 785 546 761 545 761 545 764 544 764 544 774 542 774 542 778 541 778 541 770 540 770 540 769 539 769 539 765 538 765 538 769 537 769 537 772 536 772 536 767 535 767 535 769 534 769 534 763 533 763 533 762 532 762 532 766 531 766 531 770 530 770 530 764 529 764 529 772 528 772 528 775 527 775 527 772 526 772 526 778 525 778 525 782 524 782 524 767 523 767 523 778 522 778 522 781 521 781 521 773 520 773 520 779 519 779 519 775 518 775 518 777 517 777 517 782 516 782 516 775 515 775 515 776 514 776 514 775 513 775 513 769 512 769 512 777 511 777 511 774 510 774 510 778 509 778 509 784 508 784 508 782 507 782 507 788 506 788 506 775 505 775 505 779 504 779 504 770 503 770 503 772 502 772 502 767 501 767 501 769 500 769 500 768 499 768 499 770 498 770 498 769 497 769 497 765 496 765 496 772 495 772 495 769 494 769 494 772 493 772 493 780 492 780 492 778 490 778 490 772 489 772 489 766 488 766 488 762 487 762 487 775 486 775 486 772 485 772 485 779 484 779 484 775 483 775 483 773 482 773 482 764 481 764 481 771 480 771 480 768 479 768 479 762 478 762 478 763 477 763 477 778 476 778 476 777 475 777 475 780 474 780 474 769 473 769 473 774 471 774 471 769 470 769 470 772 469 772 469 750 468 750 468 767 467 767 467 772 466 772 466 773 465 773 465 790 464 790 464 780 463 780 463 764 462 764 462 776 461 776 461 779 460 779 460 778 459 778 459 774 458 774 458 772 457 772 457 771 456 771 456 774 455 774 455 779 454 779 454 773 453 773 453 766 452 766 452 772 451 772 451 749 450 749 450 768 449 768 449 771 447 771 447 764 446 764 446 767 445 767 445 769 444 769 444 770 443 770 443 768 442 768 442 772 441 772 441 766 440 766 440 768 439 768 439 765 437 765 437 771 435 771 435 775 433 775 433 779 432 779 432 761 431 761 431 767 430 767 430 766 429 766 429 765 428 765 428 766 427 766 427 773 426 773 426 766 425 766 425 762 424 762 424 769 423 769 423 770 422 770 422 771 421 771 421 768 420 768 420 780 419 780 419 777 417 777 417 778 416 778 416 770 415 770 415 773 414 773 414 769 413 769 413 777 412 777 412 775 411 775 411 772 410 772 410 775 409 775 409 766 408 766 408 774 407 774 407 770 406 770 406 775 405 775 405 778 404 778 404 771 403 771 403 780 402 780 402 772 401 772 401 770 400 770 400 771 399 771 399 775 398 775 398 776 397 776 397 779 396 779 396 775 395 775 395 776 394 776 394 777 393 777 393 780 392 780 392 781 391 781 391 775 390 775 390 781 389 781 389 761 388 761 388 778 387 778 387 777 385 777 385 778 384 778 384 774 383 774 383 771 382 771 382 781 381 781 381 780 379 780 379 773 378 773 378 766 377 766 377 771 376 771 376 772 375 772 375 767 374 767 374 768 372 768 372 747 371 747 371 770 370 770 370 773 369 773 369 758 368 758 368 762 367 762 367 747 366 747 366 759 365 759 365 760 364 760 364 766 363 766 363 768 361 768 361 767 360 767 360 765 359 765 359 759 358 759 358 764 357 764 357 768 356 768 356 771 355 771 355 764 353 764 353 774 352 774 352 765 351 765 351 772 350 772 350 769 349 769 349 774 348 774 348 768 347 768 347 774 346 774 346 772 343 772 343 775 342 775 342 758 341 758 341 764 340 764 340 768 339 768 339 752 338 752 338 768 337 768 337 777 336 777 336 759 335 759 335 765 334 765 334 776 333 776 333 775 332 775 332 774 331 774 331 775 330 775 330 777 329 777 329 783 328 783 328 770 327 770 327 775 326 775 326 757 325 757 325 774 323 774 323 773 322 773 322 762 321 762 321 766 320 766 320 767 319 767 319 768 318 768 318 769 317 769 317 761 316 761 316 772 315 772 315 759 314 759 314 764 313 764 313 767 311 767 311 772 310 772 310 776 309 776 309 774 308 774 308 772 307 772 307 776 306 776 306 771 305 771 305 769 304 769 304 764 303 764 303 757 302 757 302 762 301 762 301 777 300 777 300 746 299 746 299 734 298 734 298 743 297 743 297 744 296 744 296 746 295 746 295 743 294 743 294 746 293 746 293 747 292 747 292 745 291 745 291 740 290 740 290 745 289 745 289 748 288 748 288 736 287 736 287 750 285 750 285 747 284 747 284 750 283 750 283 748 282 748 282 746 281 746 281 744 280 744 280 743 279 743 279 745 278 745 278 744 277 744 277 746 276 746 276 748 275 748 275 746 273 746 273 748 272 748 272 744 271 744 271 748 270 748 270 744 269 744 269 745 268 745 268 743 267 743 267 744 266 744 266 742 265 742 265 734 264 734 264 741 263 741 263 743 261 743 261 746 260 746 260 751 259 751 259 748 258 748 258 744 257 744 257 740 256 740 256 741 255 741 255 739 254 739 254 740 252 740 252 744 251 744 251 741 250 741 250 744 249 744 249 742 248 742 248 741 247 741 247 744 245 744 245 746 244 746 244 743 243 743 243 742 242 742 242 735 241 735 241 734 240 734 240 747 238 747 238 744 235 744 235 741 234 741 234 736 233 736 233 728 232 728 232 740 230 740 230 743 229 743 229 742 228 742 228 744 227 744 227 745 226 745 226 742 225 742 225 745 224 745 224 748 223 748 223 752 222 752 222 728 221 728 221 741 220 741 220 740 219 740 219 742 218 742 218 738 217 738 217 736 216 736 216 735 215 735 215 727 214 727 214 739 213 739 213 737 212 737 212 735 211 735 211 727 210 727 210 738 209 738 209 736 208 736 208 704 206 704Z" fill="#7a7edb"/></svg>

<!-- HSCROLL -->
<div class="a" style="left:69px;top:905px;width:1676px;height:16px;background:#f7f7f7"></div>
<div class="a" style="left:69px;top:905px;width:136px;height:16px;background:#ececec"></div>
<div class="a" style="left:1729px;top:905px;width:16px;height:16px;background:#ececec"></div>
<div class="a" style="left:204px;top:910px;width:1226px;height:8px;border-radius:4px;background:#c2c2c2"></div>
<!-- SELECTION BAR -->
<div class="a" style="left:69px;top:921px;width:1676px;height:56px;background:#ebebeb;border-top:1px solid #a8a8bd"></div>
<div class="grab" style="left:72px;top:927px;height:46px"></div>
<div class="lbl" style="left:80px;top:928px;font-size:13.3px">Project Rate (Hz):</div>
<div class="a" style="left:83px;top:948px;width:52px;height:21px;background:#fff;border:1px solid #c4c4c4;font-size:13px;line-height:19px;padding-left:2px">44100</div>
<div class="a" style="left:138px;top:947px;width:21px;height:22px;border-radius:4px;background:linear-gradient(#cfe6fd,#70b4f8 50%,#a9d4fb);border:1px solid #4a6ea8"></div>
<svg class="a" style="left:0;top:0" width="800" height="1000">
  <path d="M145 955h6l-3 -4z M145 960h6l-3 4z" fill="#000"/>
  <path d="M194.5 945v27 M611.5 945v27" stroke="#8a8a8a" stroke-width="1"/>
  <circle cx="465.5" cy="936" r="7.5" fill="#2f8cf5" stroke="#2a7ee0" stroke-width="0.5"/><circle cx="465.5" cy="936" r="2.5" fill="#fff"/>
  <circle cx="516" cy="936" r="7.5" fill="#fff" stroke="#a8a8a8" stroke-width="1"/>
</svg>
<div class="lbl" style="left:201px;top:928px;font-size:13.3px">Snap To:</div>
<div class="combo" style="left:202px;top:949px;width:95px">Off<div class="s"></div></div>
<div class="lbl" style="left:303px;top:928px;font-size:13.3px">Selection Start:</div>
<div class="lbl" style="left:477px;top:928px;font-size:13.3px">End</div>
<div class="lbl" style="left:527px;top:928px;font-size:13.3px">Length</div>
<div class="lbl" style="left:618px;top:928px;font-size:13.3px">Audio Position:</div>
<div class="a" style="left:303px;top:948px;width:148px;height:22px;background:#d2d2d2;border:1px solid #b8b8b8;box-shadow:inset 0 0 0 1px #ececec"></div>
<div class="a" style="left:305.1px;top:951px;font-size:12.5px;line-height:17px;color:#1818c0;width:10px;text-align:center">0</div>
<div class="a" style="left:315.0px;top:951px;font-size:12.5px;line-height:17px;color:#1818c0;width:10px;text-align:center">0</div>
<div class="a" style="left:326.1px;top:951px;font-size:11.5px;line-height:17px;color:#333;width:12px;text-align:center">h</div>
<div class="a" style="left:338.9px;top:951px;font-size:12.5px;line-height:17px;color:#1818c0;width:10px;text-align:center">0</div>
<div class="a" style="left:349.2px;top:951px;font-size:12.5px;line-height:17px;color:#1818c0;width:10px;text-align:center">0</div>
<div class="a" style="left:362.2px;top:951px;font-size:11.5px;line-height:17px;color:#333;width:12px;text-align:center">m</div>
<div class="a" style="left:375.7px;top:951px;font-size:12.5px;line-height:17px;color:#1818c0;width:10px;text-align:center">0</div>
<div class="a" style="left:385.9px;top:951px;font-size:12.5px;line-height:17px;color:#1818c0;width:10px;text-align:center">0</div>
<div class="a" style="left:393.2px;top:951px;font-size:12.5px;line-height:17px;color:#1818c0;width:10px;text-align:center">.</div>
<div class="a" style="left:398.7px;top:951px;font-size:12.5px;line-height:17px;color:#1818c0;width:10px;text-align:center">0</div>
<div class="a" style="left:409.0px;top:951px;font-size:12.5px;line-height:17px;color:#1818c0;width:10px;text-align:center">0</div>
<div class="a" style="left:418.7px;top:951px;font-size:12.5px;line-height:17px;color:#1818c0;width:10px;text-align:center">0</div>
<div class="a" style="left:430.0px;top:951px;font-size:11.5px;line-height:17px;color:#333;width:12px;text-align:center">s</div>
<div class="a" style="left:439.2px;top:950px;width:10px;height:18px;background:#dadada;border-left:1px solid #a0a0a0"></div>
<svg class="a" style="left:439.2px;top:955px" width="10" height="8"><path d="M1.5 1.5h7l-3.5 5z" fill="#000"/></svg>
<div class="a" style="left:457px;top:948px;width:148px;height:22px;background:#d2d2d2;border:1px solid #b8b8b8;box-shadow:inset 0 0 0 1px #ececec"></div>
<div class="a" style="left:459.4px;top:951px;font-size:12.5px;line-height:17px;color:#1818c0;width:10px;text-align:center">0</div>
<div class="a" style="left:469.3px;top:951px;font-size:12.5px;line-height:17px;color:#1818c0;width:10px;text-align:center">0</div>
<div class="a" style="left:480.4px;top:951px;font-size:11.5px;line-height:17px;color:#333;width:12px;text-align:center">h</div>
<div class="a" style="left:493.2px;top:951px;font-size:12.5px;line-height:17px;color:#1818c0;width:10px;text-align:center">0</div>
<div class="a" style="left:503.5px;top:951px;font-size:12.5px;line-height:17px;color:#1818c0;width:10px;text-align:center">0</div>
<div class="a" style="left:516.5px;top:951px;font-size:11.5px;line-height:17px;color:#333;width:12px;text-align:center">m</div>
<div class="a" style="left:530.0px;top:951px;font-size:12.5px;line-height:17px;color:#1818c0;width:10px;text-align:center">0</div>
<div class="a" style="left:540.2px;top:951px;font-size:12.5px;line-height:17px;color:#1818c0;width:10px;text-align:center">0</div>
<div class="a" style="left:547.5px;top:951px;font-size:12.5px;line-height:17px;color:#1818c0;width:10px;text-align:center">.</div>
<div class="a" style="left:553.0px;top:951px;font-size:12.5px;line-height:17px;color:#1818c0;width:10px;text-align:center">0</div>
<div class="a" style="left:563.3px;top:951px;font-size:12.5px;line-height:17px;color:#1818c0;width:10px;text-align:center">0</div>
<div class="a" style="left:573.0px;top:951px;font-size:12.5px;line-height:17px;color:#1818c0;width:10px;text-align:center">0</div>
<div class="a" style="left:584.3px;top:951px;font-size:11.5px;line-height:17px;color:#333;width:12px;text-align:center">s</div>
<div class="a" style="left:593.5px;top:950px;width:10px;height:18px;background:#dadada;border-left:1px solid #a0a0a0"></div>
<svg class="a" style="left:593.5px;top:955px" width="10" height="8"><path d="M1.5 1.5h7l-3.5 5z" fill="#000"/></svg>
<div class="a" style="left:618px;top:948px;width:148px;height:22px;background:#d2d2d2;border:1px solid #b8b8b8;box-shadow:inset 0 0 0 1px #ececec"></div>
<div class="a" style="left:620.5px;top:951px;font-size:12.5px;line-height:17px;color:#1818c0;width:10px;text-align:center">0</div>
<div class="a" style="left:630.4px;top:951px;font-size:12.5px;line-height:17px;color:#1818c0;width:10px;text-align:center">0</div>
<div class="a" style="left:641.5px;top:951px;font-size:11.5px;line-height:17px;color:#333;width:12px;text-align:center">h</div>
<div class="a" style="left:654.3px;top:951px;font-size:12.5px;line-height:17px;color:#1818c0;width:10px;text-align:center">0</div>
<div class="a" style="left:664.6px;top:951px;font-size:12.5px;line-height:17px;color:#1818c0;width:10px;text-align:center">0</div>
<div class="a" style="left:677.6px;top:951px;font-size:11.5px;line-height:17px;color:#333;width:12px;text-align:center">m</div>
<div class="a" style="left:691.1px;top:951px;font-size:12.5px;line-height:17px;color:#1818c0;width:10px;text-align:center">0</div>
<div class="a" style="left:701.3px;top:951px;font-size:12.5px;line-height:17px;color:#1818c0;width:10px;text-align:center">0</div>
<div class="a" style="left:708.6px;top:951px;font-size:12.5px;line-height:17px;color:#1818c0;width:10px;text-align:center">.</div>
<div class="a" style="left:714.1px;top:951px;font-size:12.5px;line-height:17px;color:#1818c0;width:10px;text-align:center">0</div>
<div class="a" style="left:724.4px;top:951px;font-size:12.5px;line-height:17px;color:#1818c0;width:10px;text-align:center">0</div>
<div class="a" style="left:734.1px;top:951px;font-size:12.5px;line-height:17px;color:#1818c0;width:10px;text-align:center">0</div>
<div class="a" style="left:745.4px;top:951px;font-size:11.5px;line-height:17px;color:#333;width:12px;text-align:center">s</div>
<div class="a" style="left:754.6px;top:950px;width:10px;height:18px;background:#dadada;border-left:1px solid #a0a0a0"></div>
<svg class="a" style="left:754.6px;top:955px" width="10" height="8"><path d="M1.5 1.5h7l-3.5 5z" fill="#000"/></svg>

<!-- STATUS -->
<div class="a" style="left:69px;top:977px;width:1676px;height:19px;background:#ebebeb;border-top:1px solid #a8a8bd;box-shadow:inset 0 1px 0 #fafafa"></div>
<div class="lbl" style="left:73px;top:979px;font-size:12px">Click and drag to select audio</div>
<svg class="a" style="left:1730px;top:981px" width="15" height="15"><path d="M3 14L14 3 M7 14L14 7 M11 14L14 11" stroke="#9a9a9a" stroke-width="1"/></svg>
</body></html>
